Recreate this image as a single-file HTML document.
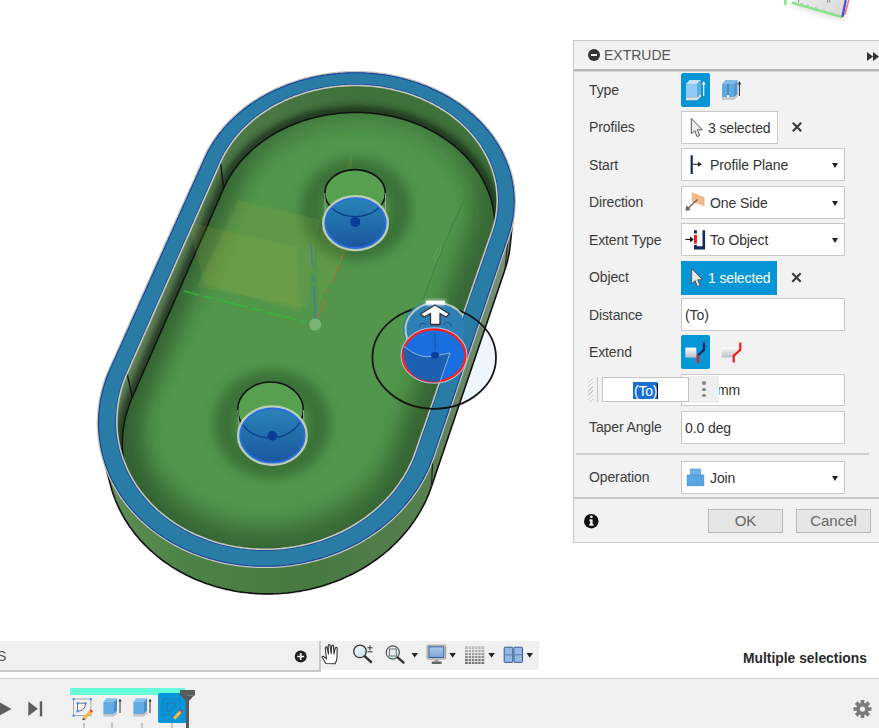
<!DOCTYPE html>
<html><head><meta charset="utf-8">
<style>
*{margin:0;padding:0;box-sizing:border-box}
html,body{width:879px;height:728px;overflow:hidden;background:#fff;font-family:"Liberation Sans",sans-serif;color:#3c3c3c}
.abs{position:absolute}
#panel{position:absolute;left:573px;top:40px;width:330px;height:503px;background:#f2f2f2;border:1px solid #c8c8c8}
#hdr{position:absolute;left:0;top:0;width:100%;height:30px;border-bottom:2px solid #b6b6b6;box-shadow:0 1px 0 #d6d6d6}
#hdr .t{position:absolute;left:30px;top:6px;font-size:14px;color:#555}
.lbl{position:absolute;left:15px;margin-top:-1px;font-size:14px;letter-spacing:-0.12px;color:#3c3c3c;white-space:nowrap}
.box{position:absolute;left:107px;width:164px;height:33px;background:#fff;border:1px solid #c8c8c8;font-size:14px}
.box .v{position:absolute;left:28px;top:8px;color:#333;white-space:nowrap;letter-spacing:-0.1px}
.dd{position:absolute;right:6px;top:14px;width:0;height:0;border-left:3.5px solid transparent;border-right:3.5px solid transparent;border-top:5px solid #222}
.btn{position:absolute;top:468px;width:75px;height:24px;background:#e6e6e6;border:1px solid #b9b9b9;font-size:15px;color:#666;text-align:center;line-height:22px}
#nav{position:absolute;left:0;top:641px;width:539px;height:29px;background:#f0f0f0}
#search{position:absolute;left:0;top:641px;width:321px;height:31px;background:#f0f0f0;border-right:2px solid #c8c8c8;border-bottom:2px solid #c8c8c8}
#tl{position:absolute;left:0;top:678px;width:879px;height:50px;background:#f0f0f0;border-top:1px solid #d0d0d0}
.tick{position:absolute;top:44px;width:2px;height:6px;background:#c4c4c4}
</style></head><body>
<svg class="abs" style="left:0;top:0" width="879" height="640" viewBox="0 0 879 640">
<defs>
  <linearGradient id="gWall" gradientUnits="userSpaceOnUse" x1="100" y1="0" x2="515" y2="0">
    <stop offset="0" stop-color="#6a8a62"/>
    <stop offset="0.08" stop-color="#578a50"/>
    <stop offset="0.2" stop-color="#4e8347"/>
    <stop offset="0.5" stop-color="#467a40"/>
    <stop offset="0.8" stop-color="#587f51"/>
    <stop offset="0.9" stop-color="#6c8868"/>
    <stop offset="1" stop-color="#7a927a"/>
  </linearGradient>
  <filter id="blur8" x="-20%" y="-20%" width="140%" height="140%"><feGaussianBlur stdDeviation="9"/></filter>
  <filter id="blur6" x="-30%" y="-30%" width="160%" height="160%"><feGaussianBlur stdDeviation="6"/></filter>
  <filter id="blur11" x="-30%" y="-30%" width="160%" height="160%"><feGaussianBlur stdDeviation="11"/></filter>
  <filter id="blur3" x="-20%" y="-20%" width="140%" height="140%"><feGaussianBlur stdDeviation="3"/></filter>
  <clipPath id="cIn"><path d="M491.9 231.4 L492.5 229.4 L493.2 227.5 L493.7 225.5 L494.3 223.5 L494.7 221.5 L495.2 219.5 L495.6 217.5 L495.9 215.4 L496.2 213.4 L496.5 211.4 L496.7 209.4 L496.9 207.4 L497.0 205.3 L497.1 203.3 L497.2 201.3 L497.2 199.3 L497.1 197.3 L497.0 195.2 L496.9 193.2 L496.7 191.2 L496.5 189.2 L496.3 187.2 L496.0 185.2 L495.6 183.2 L495.2 181.2 L494.8 179.3 L494.3 177.3 L493.8 175.3 L493.3 173.4 L492.7 171.4 L492.0 169.5 L491.3 167.6 L490.6 165.7 L489.8 163.8 L489.0 161.9 L488.2 160.0 L487.3 158.1 L486.4 156.3 L485.4 154.5 L484.4 152.6 L483.4 150.8 L482.3 149.1 L481.2 147.3 L480.1 145.5 L478.9 143.8 L477.7 142.1 L476.4 140.4 L475.1 138.7 L473.8 137.0 L472.4 135.4 L471.0 133.8 L469.6 132.2 L468.1 130.6 L466.6 129.0 L465.1 127.5 L463.6 126.0 L462.0 124.5 L460.3 123.0 L458.7 121.6 L457.0 120.2 L455.3 118.8 L453.6 117.4 L451.8 116.0 L450.0 114.7 L448.2 113.4 L446.3 112.2 L444.5 110.9 L442.6 109.7 L440.6 108.5 L438.7 107.3 L436.7 106.2 L434.7 105.1 L432.7 104.0 L430.7 103.0 L428.6 101.9 L426.5 100.9 L424.4 100.0 L422.3 99.0 L420.1 98.1 L418.0 97.3 L415.8 96.4 L413.6 95.6 L411.4 94.8 L409.2 94.0 L406.9 93.3 L404.7 92.6 L402.4 92.0 L400.1 91.3 L397.8 90.7 L395.5 90.2 L393.2 89.6 L390.9 89.1 L388.5 88.7 L386.2 88.2 L383.8 87.8 L381.5 87.4 L379.1 87.1 L376.7 86.8 L374.3 86.5 L371.9 86.3 L369.6 86.0 L367.2 85.9 L364.7 85.7 L362.3 85.6 L359.9 85.5 L357.5 85.5 L355.1 85.5 L352.7 85.5 L350.3 85.5 L347.9 85.6 L345.5 85.7 L343.1 85.9 L340.7 86.1 L338.3 86.3 L335.9 86.5 L333.5 86.8 L331.1 87.1 L328.7 87.5 L326.4 87.9 L324.0 88.3 L321.6 88.7 L319.3 89.2 L317.0 89.7 L314.6 90.2 L312.3 90.8 L310.0 91.4 L307.7 92.1 L305.5 92.7 L303.2 93.4 L301.0 94.2 L298.7 94.9 L296.5 95.7 L294.3 96.5 L292.1 97.4 L289.9 98.3 L287.8 99.2 L285.7 100.1 L283.6 101.1 L281.5 102.1 L279.4 103.1 L277.3 104.2 L275.3 105.3 L273.3 106.4 L271.3 107.5 L269.4 108.7 L267.4 109.9 L265.5 111.1 L263.6 112.4 L261.8 113.6 L259.9 114.9 L258.1 116.3 L256.4 117.6 L254.6 119.0 L252.9 120.4 L251.2 121.8 L249.5 123.3 L247.9 124.8 L246.3 126.3 L244.7 127.8 L243.2 129.3 L241.7 130.9 L240.2 132.5 L238.8 134.1 L237.3 135.7 L236.0 137.4 L234.6 139.0 L233.3 140.7 L232.1 142.4 L230.8 144.2 L229.6 145.9 L228.5 147.7 L227.3 149.4 L226.3 151.2 L225.2 153.0 L224.2 154.9 L223.2 156.7 L222.3 158.5 L221.4 160.4 L220.5 162.3 L220.5 162.3 L219.6 164.5 L218.6 166.7 L217.6 169.0 L216.6 171.2 L215.6 173.4 L214.6 175.7 L213.6 177.9 L212.6 180.2 L211.6 182.4 L210.6 184.7 L209.6 186.9 L208.6 189.2 L207.6 191.5 L206.6 193.7 L205.6 196.0 L204.6 198.3 L203.6 200.5 L202.6 202.8 L201.6 205.1 L200.6 207.4 L199.6 209.7 L198.6 212.0 L197.5 214.3 L196.5 216.6 L195.5 218.9 L194.5 221.2 L193.5 223.5 L192.4 225.8 L191.4 228.1 L190.4 230.4 L189.4 232.7 L188.3 235.1 L187.3 237.4 L186.3 239.7 L185.2 242.1 L184.2 244.4 L183.2 246.8 L182.1 249.1 L181.1 251.5 L180.1 253.8 L179.0 256.2 L178.0 258.5 L176.9 260.9 L175.9 263.3 L174.8 265.6 L173.8 268.0 L172.7 270.4 L171.7 272.8 L170.6 275.2 L169.6 277.5 L168.5 279.9 L167.4 282.3 L166.4 284.7 L165.3 287.1 L164.2 289.5 L163.2 292.0 L162.1 294.4 L161.0 296.8 L160.0 299.2 L158.9 301.6 L157.8 304.1 L156.7 306.5 L155.7 308.9 L154.6 311.4 L153.5 313.8 L152.4 316.3 L151.3 318.7 L150.3 321.2 L149.2 323.6 L148.1 326.1 L147.0 328.6 L145.9 331.0 L144.8 333.5 L143.7 336.0 L142.6 338.5 L141.5 340.9 L140.4 343.4 L139.3 345.9 L138.2 348.4 L137.1 350.9 L136.0 353.4 L134.9 355.9 L133.8 358.4 L132.6 360.9 L131.5 363.5 L130.4 366.0 L129.3 368.5 L128.2 371.0 L127.1 373.6 L127.1 373.6 L126.1 375.7 L125.2 377.9 L124.4 380.1 L123.6 382.3 L122.8 384.5 L122.1 386.7 L121.4 389.0 L120.8 391.2 L120.2 393.5 L119.7 395.7 L119.2 398.0 L118.8 400.3 L118.4 402.6 L118.0 404.9 L117.7 407.2 L117.4 409.5 L117.2 411.8 L117.1 414.1 L116.9 416.4 L116.9 418.7 L116.8 421.0 L116.8 423.4 L116.9 425.7 L117.0 428.0 L117.2 430.3 L117.4 432.6 L117.7 434.9 L118.0 437.2 L118.3 439.5 L118.7 441.8 L119.2 444.1 L119.7 446.4 L120.2 448.7 L120.8 450.9 L121.4 453.2 L122.1 455.4 L122.8 457.7 L123.6 459.9 L124.4 462.1 L125.3 464.3 L126.2 466.5 L127.2 468.7 L128.2 470.8 L129.3 473.0 L130.4 475.1 L131.5 477.2 L132.7 479.3 L133.9 481.4 L135.2 483.4 L136.5 485.5 L137.9 487.5 L139.3 489.5 L140.8 491.5 L142.3 493.4 L143.8 495.3 L145.4 497.2 L147.0 499.1 L148.6 500.9 L150.3 502.8 L152.1 504.6 L153.9 506.3 L155.7 508.1 L157.5 509.8 L159.4 511.5 L161.3 513.1 L163.3 514.7 L165.3 516.3 L167.3 517.9 L169.4 519.4 L171.5 520.9 L173.7 522.4 L175.8 523.8 L178.0 525.2 L180.3 526.6 L182.5 527.9 L184.8 529.2 L187.1 530.4 L189.5 531.6 L191.8 532.8 L194.2 534.0 L196.7 535.1 L199.1 536.1 L201.6 537.1 L204.1 538.1 L206.6 539.1 L209.1 540.0 L211.7 540.8 L214.3 541.7 L216.9 542.4 L219.5 543.2 L222.1 543.9 L224.8 544.5 L227.5 545.2 L230.1 545.7 L232.8 546.3 L235.5 546.8 L238.3 547.2 L241.0 547.6 L243.7 548.0 L246.5 548.3 L249.2 548.6 L252.0 548.8 L254.8 549.0 L257.5 549.1 L260.3 549.2 L263.1 549.3 L265.9 549.3 L268.7 549.2 L271.4 549.2 L274.2 549.0 L277.0 548.9 L279.8 548.7 L282.6 548.4 L285.3 548.1 L288.1 547.8 L290.8 547.4 L293.6 547.0 L296.3 546.5 L299.1 546.0 L301.8 545.4 L304.5 544.8 L307.2 544.2 L309.9 543.5 L312.6 542.8 L315.2 542.0 L317.9 541.2 L320.5 540.4 L323.1 539.5 L325.7 538.6 L328.2 537.6 L330.8 536.6 L333.3 535.5 L335.8 534.5 L338.3 533.3 L340.8 532.2 L343.2 531.0 L345.6 529.7 L348.0 528.5 L350.3 527.2 L352.7 525.8 L355.0 524.5 L357.2 523.0 L359.5 521.6 L361.7 520.1 L363.9 518.6 L366.0 517.1 L368.1 515.5 L370.2 513.9 L372.3 512.2 L374.3 510.6 L376.2 508.9 L378.2 507.2 L380.1 505.4 L382.0 503.6 L383.8 501.8 L385.6 500.0 L387.3 498.1 L389.1 496.2 L390.7 494.3 L392.4 492.4 L394.0 490.4 L395.5 488.5 L397.0 486.5 L398.5 484.4 L399.9 482.4 L401.3 480.3 L402.7 478.3 L404.0 476.2 L405.2 474.1 L406.4 471.9 L407.6 469.8 L408.7 467.6 L409.8 465.4 L410.9 463.2 L411.8 461.0 L412.8 458.8 L413.7 456.6 L414.5 454.4 L415.3 452.1 L415.3 452.1 L416.3 449.5 L417.2 446.8 L418.1 444.2 L419.0 441.5 L419.9 438.9 L420.8 436.3 L421.7 433.6 L422.6 431.0 L423.6 428.4 L424.5 425.8 L425.4 423.2 L426.3 420.6 L427.2 418.0 L428.1 415.4 L429.0 412.8 L429.9 410.2 L430.8 407.6 L431.7 405.0 L432.6 402.4 L433.5 399.9 L434.3 397.3 L435.2 394.7 L436.1 392.2 L437.0 389.6 L437.9 387.1 L438.8 384.5 L439.7 382.0 L440.5 379.4 L441.4 376.9 L442.3 374.4 L443.2 371.8 L444.1 369.3 L444.9 366.8 L445.8 364.3 L446.7 361.7 L447.5 359.2 L448.4 356.7 L449.3 354.2 L450.2 351.7 L451.0 349.2 L451.9 346.7 L452.7 344.2 L453.6 341.8 L454.5 339.3 L455.3 336.8 L456.2 334.3 L457.0 331.9 L457.9 329.4 L458.7 326.9 L459.6 324.5 L460.5 322.0 L461.3 319.6 L462.2 317.1 L463.0 314.7 L463.8 312.2 L464.7 309.8 L465.5 307.4 L466.4 304.9 L467.2 302.5 L468.1 300.1 L468.9 297.7 L469.7 295.3 L470.6 292.8 L471.4 290.4 L472.2 288.0 L473.1 285.6 L473.9 283.2 L474.7 280.8 L475.6 278.5 L476.4 276.1 L477.2 273.7 L478.0 271.3 L478.9 268.9 L479.7 266.6 L480.5 264.2 L481.3 261.8 L482.1 259.5 L483.0 257.1 L483.8 254.8 L484.6 252.4 L485.4 250.1 L486.2 247.7 L487.0 245.4 L487.8 243.0 L488.6 240.7 L489.5 238.4 L490.3 236.1 L491.1 233.7 L491.9 231.4 Z"/></clipPath>
  <clipPath id="cFloorVis"><path d="M489.6 256.8 L490.3 254.9 L490.9 252.9 L491.4 250.9 L492.0 249.0 L492.4 247.0 L492.9 245.0 L493.3 243.0 L493.6 241.0 L493.9 239.0 L494.2 237.0 L494.4 235.0 L494.6 233.0 L494.7 231.0 L494.8 229.0 L494.8 227.0 L494.8 225.0 L494.8 223.1 L494.7 221.1 L494.6 219.1 L494.4 217.1 L494.2 215.1 L494.0 213.1 L493.7 211.1 L493.3 209.2 L493.0 207.2 L492.5 205.3 L492.1 203.3 L491.6 201.4 L491.0 199.4 L490.4 197.5 L489.8 195.6 L489.1 193.7 L488.4 191.8 L487.7 189.9 L486.9 188.1 L486.1 186.2 L485.2 184.4 L484.3 182.6 L483.4 180.7 L482.4 179.0 L481.4 177.2 L480.3 175.4 L479.2 173.7 L478.1 171.9 L477.0 170.2 L475.8 168.5 L474.5 166.8 L473.3 165.2 L472.0 163.5 L470.6 161.9 L469.3 160.3 L467.8 158.7 L466.4 157.1 L464.9 155.6 L463.5 154.1 L461.9 152.6 L460.4 151.1 L458.8 149.7 L457.2 148.2 L455.5 146.8 L453.8 145.4 L452.1 144.1 L450.4 142.7 L448.6 141.4 L446.8 140.2 L445.0 138.9 L443.2 137.7 L441.3 136.5 L439.4 135.3 L437.5 134.1 L435.6 133.0 L433.6 131.9 L431.7 130.8 L429.7 129.8 L427.6 128.8 L425.6 127.8 L423.5 126.9 L421.5 125.9 L419.4 125.0 L417.2 124.2 L415.1 123.3 L413.0 122.5 L410.8 121.7 L408.6 121.0 L406.4 120.3 L404.2 119.6 L402.0 118.9 L399.7 118.3 L397.5 117.7 L395.2 117.2 L392.9 116.6 L390.7 116.1 L388.4 115.7 L386.1 115.2 L383.7 114.8 L381.4 114.5 L379.1 114.1 L376.8 113.8 L374.4 113.5 L372.1 113.3 L369.7 113.1 L367.4 112.9 L365.0 112.8 L362.7 112.6 L360.3 112.6 L357.9 112.5 L355.6 112.5 L353.2 112.5 L350.8 112.6 L348.5 112.7 L346.1 112.8 L343.7 112.9 L341.4 113.1 L339.0 113.3 L336.7 113.6 L334.3 113.9 L332.0 114.2 L329.7 114.5 L327.4 114.9 L325.0 115.3 L322.7 115.7 L320.4 116.2 L318.1 116.7 L315.9 117.2 L313.6 117.8 L311.3 118.4 L309.1 119.0 L306.9 119.7 L304.6 120.4 L302.4 121.1 L300.2 121.9 L298.1 122.7 L295.9 123.5 L293.8 124.3 L291.6 125.2 L289.5 126.1 L287.4 127.0 L285.4 128.0 L283.3 129.0 L281.3 130.0 L279.3 131.0 L277.3 132.1 L275.3 133.2 L273.4 134.4 L271.5 135.5 L269.6 136.7 L267.7 137.9 L265.8 139.1 L264.0 140.4 L262.2 141.7 L260.5 143.0 L258.7 144.4 L257.0 145.7 L255.3 147.1 L253.6 148.5 L252.0 150.0 L250.4 151.4 L248.8 152.9 L247.3 154.4 L245.8 155.9 L244.3 157.5 L242.9 159.0 L241.5 160.6 L240.1 162.3 L238.7 163.9 L237.4 165.5 L236.1 167.2 L234.9 168.9 L233.7 170.6 L232.5 172.3 L231.4 174.1 L230.3 175.8 L229.2 177.6 L228.2 179.4 L227.2 181.2 L226.2 183.0 L225.3 184.8 L224.5 186.7 L223.6 188.5 L223.6 188.5 L222.7 190.7 L221.7 192.9 L220.7 195.1 L219.8 197.4 L218.8 199.6 L217.8 201.8 L216.9 204.0 L215.9 206.2 L214.9 208.4 L213.9 210.7 L213.0 212.9 L212.0 215.1 L211.0 217.4 L210.0 219.6 L209.0 221.8 L208.1 224.1 L207.1 226.3 L206.1 228.6 L205.1 230.9 L204.1 233.1 L203.1 235.4 L202.1 237.6 L201.1 239.9 L200.1 242.2 L199.1 244.5 L198.1 246.7 L197.1 249.0 L196.1 251.3 L195.1 253.6 L194.1 255.9 L193.1 258.2 L192.1 260.5 L191.1 262.8 L190.1 265.1 L189.1 267.4 L188.1 269.7 L187.1 272.0 L186.1 274.3 L185.0 276.7 L184.0 279.0 L183.0 281.3 L182.0 283.6 L181.0 286.0 L179.9 288.3 L178.9 290.7 L177.9 293.0 L176.9 295.3 L175.8 297.7 L174.8 300.1 L173.8 302.4 L172.7 304.8 L171.7 307.1 L170.7 309.5 L169.6 311.9 L168.6 314.3 L167.5 316.6 L166.5 319.0 L165.5 321.4 L164.4 323.8 L163.4 326.2 L162.3 328.6 L161.3 331.0 L160.2 333.4 L159.2 335.8 L158.1 338.2 L157.0 340.6 L156.0 343.1 L154.9 345.5 L153.9 347.9 L152.8 350.3 L151.7 352.8 L150.7 355.2 L149.6 357.6 L148.5 360.1 L147.5 362.5 L146.4 365.0 L145.3 367.4 L144.2 369.9 L143.2 372.4 L142.1 374.8 L141.0 377.3 L139.9 379.8 L138.8 382.3 L137.7 384.7 L136.7 387.2 L135.6 389.7 L134.5 392.2 L133.4 394.7 L132.3 397.2 L132.3 397.2 L131.4 399.3 L130.5 401.5 L129.7 403.6 L128.9 405.8 L128.2 408.0 L127.5 410.2 L126.8 412.4 L126.2 414.6 L125.6 416.8 L125.1 419.0 L124.6 421.3 L124.2 423.5 L123.8 425.8 L123.5 428.1 L123.2 430.3 L122.9 432.6 L122.7 434.9 L122.6 437.1 L122.4 439.4 L122.4 441.7 L122.3 444.0 L122.4 446.3 L122.4 448.6 L122.6 450.8 L122.7 453.1 L122.9 455.4 L123.2 457.7 L123.5 459.9 L123.8 462.2 L124.2 464.5 L124.7 466.7 L125.2 469.0 L125.7 471.2 L126.3 473.4 L126.9 475.7 L127.6 477.9 L128.3 480.1 L129.1 482.3 L129.9 484.5 L130.7 486.6 L131.6 488.8 L132.6 490.9 L133.6 493.1 L134.6 495.2 L135.7 497.3 L136.8 499.3 L138.0 501.4 L139.2 503.4 L140.4 505.5 L141.7 507.5 L143.1 509.4 L144.4 511.4 L145.9 513.3 L147.3 515.3 L148.8 517.2 L150.4 519.0 L152.0 520.9 L153.6 522.7 L155.3 524.5 L157.0 526.3 L158.7 528.0 L160.5 529.7 L162.3 531.4 L164.2 533.0 L166.0 534.7 L168.0 536.3 L169.9 537.8 L171.9 539.4 L173.9 540.9 L176.0 542.4 L178.1 543.8 L180.2 545.2 L182.4 546.6 L184.6 547.9 L186.8 549.2 L189.0 550.5 L191.3 551.7 L193.6 552.9 L195.9 554.1 L198.3 555.2 L200.6 556.3 L203.0 557.3 L205.4 558.3 L207.9 559.3 L210.4 560.2 L212.8 561.1 L215.4 562.0 L217.9 562.8 L220.4 563.5 L223.0 564.3 L225.6 565.0 L228.2 565.6 L230.8 566.2 L233.4 566.8 L236.0 567.3 L238.7 567.8 L241.3 568.2 L244.0 568.6 L246.7 569.0 L249.4 569.3 L252.1 569.5 L254.8 569.8 L257.5 569.9 L260.2 570.1 L262.9 570.2 L265.6 570.2 L268.3 570.2 L271.1 570.2 L273.8 570.1 L276.5 570.0 L279.2 569.8 L281.9 569.6 L284.7 569.4 L287.4 569.1 L290.1 568.8 L292.8 568.4 L295.5 568.0 L298.1 567.5 L300.8 567.0 L303.5 566.5 L306.1 565.9 L308.8 565.2 L311.4 564.6 L314.0 563.9 L316.6 563.1 L319.2 562.3 L321.7 561.5 L324.3 560.6 L326.8 559.7 L329.3 558.7 L331.8 557.8 L334.3 556.7 L336.7 555.7 L339.2 554.6 L341.6 553.4 L344.0 552.2 L346.3 551.0 L348.6 549.8 L351.0 548.5 L353.2 547.2 L355.5 545.8 L357.7 544.4 L359.9 543.0 L362.1 541.5 L364.2 540.1 L366.3 538.5 L368.4 537.0 L370.4 535.4 L372.4 533.8 L374.4 532.1 L376.3 530.5 L378.2 528.8 L380.1 527.1 L381.9 525.3 L383.7 523.5 L385.4 521.7 L387.2 519.9 L388.8 518.0 L390.5 516.1 L392.1 514.2 L393.6 512.3 L395.2 510.4 L396.7 508.4 L398.1 506.4 L399.5 504.4 L400.8 502.4 L402.2 500.3 L403.4 498.3 L404.7 496.2 L405.9 494.1 L407.0 492.0 L408.1 489.8 L409.2 487.7 L410.2 485.5 L411.1 483.4 L412.1 481.2 L412.9 479.0 L413.8 476.8 L414.6 474.6 L414.6 474.6 L415.5 471.9 L416.4 469.3 L417.3 466.7 L418.2 464.1 L419.0 461.5 L419.9 458.9 L420.8 456.4 L421.7 453.8 L422.6 451.2 L423.5 448.6 L424.4 446.0 L425.3 443.5 L426.2 440.9 L427.0 438.4 L427.9 435.8 L428.8 433.2 L429.7 430.7 L430.6 428.1 L431.4 425.6 L432.3 423.1 L433.2 420.5 L434.1 418.0 L434.9 415.5 L435.8 413.0 L436.7 410.4 L437.5 407.9 L438.4 405.4 L439.3 402.9 L440.1 400.4 L441.0 397.9 L441.8 395.4 L442.7 392.9 L443.6 390.4 L444.4 387.9 L445.3 385.5 L446.1 383.0 L447.0 380.5 L447.8 378.0 L448.7 375.6 L449.5 373.1 L450.4 370.7 L451.2 368.2 L452.1 365.7 L452.9 363.3 L453.8 360.9 L454.6 358.4 L455.4 356.0 L456.3 353.5 L457.1 351.1 L457.9 348.7 L458.8 346.3 L459.6 343.8 L460.5 341.4 L461.3 339.0 L462.1 336.6 L462.9 334.2 L463.8 331.8 L464.6 329.4 L465.4 327.0 L466.2 324.6 L467.1 322.2 L467.9 319.9 L468.7 317.5 L469.5 315.1 L470.3 312.7 L471.2 310.4 L472.0 308.0 L472.8 305.6 L473.6 303.3 L474.4 300.9 L475.2 298.6 L476.0 296.2 L476.8 293.9 L477.7 291.5 L478.5 289.2 L479.3 286.9 L480.1 284.5 L480.9 282.2 L481.7 279.9 L482.5 277.5 L483.3 275.2 L484.1 272.9 L484.9 270.6 L485.7 268.3 L486.5 266.0 L487.3 263.7 L488.0 261.4 L488.8 259.1 L489.6 256.8 Z"/></clipPath>
  <linearGradient id="gBand" gradientUnits="userSpaceOnUse" x1="130" y1="400" x2="360" y2="90">
    <stop offset="0" stop-color="#67845f"/>
    <stop offset="0.45" stop-color="#5c7e56"/>
    <stop offset="1" stop-color="#3f723b"/>
  </linearGradient>
  <linearGradient id="gDisc" x1="0" y1="0" x2="0" y2="1">
    <stop offset="0" stop-color="#2a84b6"/>
    <stop offset="1" stop-color="#1a57a0"/>
  </linearGradient>
  <filter id="glow" x="-50%" y="-50%" width="200%" height="200%"><feGaussianBlur stdDeviation="2"/></filter>
  <linearGradient id="gAO" gradientUnits="userSpaceOnUse" x1="150" y1="380" x2="380" y2="110">
    <stop offset="0" stop-color="#2f5a2d" stop-opacity="0.5"/>
    <stop offset="0.6" stop-color="#2f5a2d" stop-opacity="0.35"/>
    <stop offset="1" stop-color="#2f5a2d" stop-opacity="0.15"/>
  </linearGradient>
</defs>
<ellipse cx="434.2" cy="357.6" rx="61.8" ry="51.2" fill="#eef5fc"/>
<path d="M431.4 486.7 L430.5 489.2 L429.6 491.7 L428.7 494.1 L427.6 496.6 L426.6 499.0 L425.5 501.4 L424.3 503.8 L423.1 506.2 L421.8 508.5 L420.5 510.9 L419.1 513.2 L417.7 515.5 L416.3 517.8 L414.8 520.1 L413.2 522.3 L411.6 524.6 L410.0 526.8 L408.3 528.9 L406.6 531.1 L404.8 533.2 L403.0 535.3 L401.1 537.4 L399.2 539.5 L397.3 541.5 L395.3 543.5 L393.2 545.5 L391.2 547.4 L389.1 549.3 L386.9 551.2 L384.7 553.0 L382.5 554.8 L380.2 556.6 L377.9 558.3 L375.6 560.0 L373.2 561.7 L370.8 563.3 L368.4 564.9 L365.9 566.5 L363.4 568.0 L360.9 569.5 L358.3 570.9 L355.7 572.3 L353.1 573.7 L350.4 575.0 L347.7 576.3 L345.0 577.5 L342.3 578.7 L339.6 579.9 L336.8 581.0 L334.0 582.1 L331.2 583.1 L328.3 584.1 L325.4 585.0 L322.6 585.9 L319.7 586.7 L316.8 587.5 L313.8 588.3 L310.9 589.0 L307.9 589.7 L305.0 590.3 L302.0 590.8 L299.0 591.4 L296.0 591.8 L293.0 592.3 L290.0 592.6 L286.9 593.0 L283.9 593.2 L280.9 593.5 L277.8 593.7 L274.8 593.8 L271.8 593.9 L268.7 593.9 L265.7 593.9 L262.6 593.9 L259.6 593.8 L256.6 593.6 L253.6 593.4 L250.5 593.1 L247.5 592.8 L244.5 592.5 L241.5 592.1 L238.6 591.7 L235.6 591.2 L232.6 590.6 L229.7 590.0 L226.8 589.4 L223.9 588.7 L221.0 588.0 L218.1 587.2 L215.2 586.4 L212.4 585.5 L209.6 584.6 L206.8 583.7 L204.0 582.7 L201.3 581.6 L198.5 580.5 L195.8 579.4 L193.2 578.2 L190.5 577.0 L187.9 575.8 L185.3 574.5 L182.7 573.1 L180.2 571.7 L177.7 570.3 L175.3 568.9 L172.8 567.4 L170.4 565.8 L168.1 564.2 L165.7 562.6 L163.4 561.0 L161.2 559.3 L159.0 557.6 L156.8 555.8 L154.7 554.0 L152.6 552.2 L150.5 550.3 L148.5 548.5 L146.5 546.5 L144.6 544.6 L142.7 542.6 L140.8 540.6 L139.0 538.5 L137.3 536.5 L135.5 534.4 L133.9 532.3 L132.2 530.1 L130.7 527.9 L129.1 525.8 L127.7 523.5 L126.2 521.3 L124.8 519.0 L123.5 516.7 L122.2 514.4 L121.0 512.1 L119.8 509.8 L118.6 507.4 L117.5 505.0 L116.5 502.6 L115.5 500.2 L114.6 497.8 L113.7 495.4 L112.8 492.9 L112.0 490.5 L111.3 488.0 L110.6 485.5 L102.8 455.6 L102.1 453.1 L101.5 450.5 L101.0 447.9 L100.5 445.4 L100.1 442.8 L99.7 440.2 L99.4 437.6 L99.1 435.1 L98.9 432.5 L98.7 429.9 L98.6 427.3 L98.5 424.7 L98.5 422.1 L98.6 419.5 L98.7 416.9 L98.8 414.3 L99.0 411.7 L99.3 409.1 L99.6 406.6 L99.9 404.0 L100.3 401.4 L100.8 398.9 L101.3 396.3 L101.9 393.8 L102.5 391.2 L103.2 388.7 L103.9 386.2 L104.6 383.7 L105.5 381.2 L106.3 378.7 L107.2 376.3 L108.2 373.8 L109.2 371.4 L110.2 369.0 L204.7 158.3 L205.7 156.2 L206.7 154.1 L207.7 152.0 L208.8 150.0 L210.0 147.9 L211.1 145.9 L212.4 143.9 L213.6 141.9 L214.9 140.0 L216.3 138.0 L217.7 136.1 L219.1 134.2 L220.6 132.3 L222.1 130.5 L223.6 128.6 L225.2 126.8 L226.8 125.0 L228.5 123.2 L230.2 121.5 L231.9 119.8 L233.7 118.1 L235.5 116.4 L237.3 114.8 L239.1 113.2 L241.0 111.6 L243.0 110.0 L244.9 108.5 L246.9 107.0 L248.9 105.5 L251.0 104.0 L253.1 102.6 L255.2 101.2 L257.3 99.9 L259.5 98.5 L261.7 97.2 L263.9 96.0 L266.1 94.7 L268.4 93.5 L270.7 92.3 L273.0 91.2 L275.3 90.1 L277.7 89.0 L280.1 88.0 L282.5 86.9 L284.9 86.0 L287.3 85.0 L289.8 84.1 L292.3 83.2 L294.8 82.4 L297.3 81.6 L299.8 80.8 L302.3 80.1 L304.9 79.3 L307.4 78.7 L310.0 78.0 L312.6 77.4 L315.2 76.9 L317.8 76.3 L320.5 75.9 L323.1 75.4 L325.7 75.0 L328.4 74.6 L331.0 74.2 L333.7 73.9 L336.4 73.7 L339.0 73.4 L341.7 73.2 L344.4 73.0 L347.1 72.9 L349.8 72.8 L352.5 72.8 L355.1 72.7 L357.8 72.8 L360.5 72.8 L363.2 72.9 L365.9 73.0 L368.6 73.2 L371.2 73.4 L373.9 73.6 L376.6 73.9 L379.2 74.2 L381.9 74.5 L384.5 74.9 L387.2 75.3 L389.8 75.8 L392.4 76.3 L395.0 76.8 L397.6 77.4 L400.2 78.0 L402.8 78.6 L405.3 79.3 L407.9 80.0 L410.4 80.7 L412.9 81.5 L415.4 82.3 L417.9 83.1 L420.4 84.0 L422.8 84.9 L425.3 85.8 L427.7 86.8 L430.1 87.8 L432.4 88.9 L434.8 89.9 L437.1 91.0 L439.4 92.2 L441.7 93.3 L443.9 94.5 L446.2 95.8 L448.4 97.0 L450.5 98.3 L452.7 99.7 L454.8 101.0 L456.9 102.4 L459.0 103.8 L461.0 105.3 L463.0 106.7 L465.0 108.2 L466.9 109.7 L468.9 111.3 L470.7 112.9 L472.6 114.5 L474.4 116.1 L476.2 117.8 L477.9 119.5 L479.7 121.2 L481.3 122.9 L483.0 124.7 L484.6 126.5 L486.1 128.3 L487.7 130.1 L489.2 132.0 L490.6 133.8 L492.0 135.7 L493.4 137.6 L494.7 139.6 L496.0 141.5 L497.3 143.5 L498.5 145.5 L499.7 147.5 L500.8 149.5 L501.9 151.6 L502.9 153.6 L503.9 155.7 L504.8 157.8 L505.8 159.9 L506.6 162.0 L507.4 164.2 L508.2 166.3 L508.9 168.5 L509.6 170.6 L510.3 172.8 L510.8 175.0 L511.4 177.2 L511.9 179.4 L512.3 181.6 L512.7 183.9 L513.1 186.1 L513.4 188.3 L513.6 190.6 L513.8 192.8 L514.0 195.1 L514.1 197.3 L514.2 199.6 L514.2 201.9 L514.1 204.1 L514.0 206.4 L513.9 208.7 L513.7 210.9 L510.2 245.1 L509.9 247.3 L509.7 249.6 L509.3 251.8 L509.0 254.0 L508.5 256.2 L508.1 258.4 L507.5 260.7 L507.0 262.9 L506.3 265.0 L505.7 267.2 L505.0 269.4 Z" fill="url(#gWall)"/>
<path d="M513.7 210.9 L510.2 245.1 L509.9 247.3 L509.7 249.6 L509.3 251.8 L509.0 254.0 L508.5 256.2 L508.1 258.4 L507.5 260.7 L507.0 262.9 L506.3 265.0 L505.7 267.2 L505.0 269.4 L431.4 486.7 L430.5 489.2 L429.6 491.7 L428.7 494.1 L427.6 496.6 L426.6 499.0 L425.5 501.4 L424.3 503.8 L423.1 506.2 L421.8 508.5 L420.5 510.9 L419.1 513.2 L417.7 515.5 L416.3 517.8 L414.8 520.1 L413.2 522.3 L411.6 524.6 L410.0 526.8 L408.3 528.9 L406.6 531.1 L404.8 533.2 L403.0 535.3 L401.1 537.4 L399.2 539.5 L397.3 541.5 L395.3 543.5 L393.2 545.5 L391.2 547.4 L389.1 549.3 L386.9 551.2 L384.7 553.0 L382.5 554.8 L380.2 556.6 L377.9 558.3 L375.6 560.0 L373.2 561.7 L370.8 563.3 L368.4 564.9 L365.9 566.5 L363.4 568.0 L360.9 569.5 L358.3 570.9 L355.7 572.3 L353.1 573.7 L350.4 575.0 L347.7 576.3 L345.0 577.5 L342.3 578.7 L339.6 579.9 L336.8 581.0 L334.0 582.1 L331.2 583.1 L328.3 584.1 L325.4 585.0 L322.6 585.9 L319.7 586.7 L316.8 587.5 L313.8 588.3 L310.9 589.0 L307.9 589.7 L305.0 590.3 L302.0 590.8 L299.0 591.4 L296.0 591.8 L293.0 592.3 L290.0 592.6 L286.9 593.0 L283.9 593.2 L280.9 593.5 L277.8 593.7 L274.8 593.8 L271.8 593.9 L268.7 593.9 L265.7 593.9 L262.6 593.9 L259.6 593.8 L256.6 593.6 L253.6 593.4 L250.5 593.1 L247.5 592.8 L244.5 592.5 L241.5 592.1 L238.6 591.7 L235.6 591.2 L232.6 590.6 L229.7 590.0 L226.8 589.4 L223.9 588.7 L221.0 588.0 L218.1 587.2 L215.2 586.4 L212.4 585.5 L209.6 584.6 L206.8 583.7 L204.0 582.7 L201.3 581.6 L198.5 580.5 L195.8 579.4 L193.2 578.2 L190.5 577.0 L187.9 575.8 L185.3 574.5 L182.7 573.1 L180.2 571.7 L177.7 570.3 L175.3 568.9 L172.8 567.4 L170.4 565.8 L168.1 564.2 L165.7 562.6 L163.4 561.0 L161.2 559.3 L159.0 557.6 L156.8 555.8 L154.7 554.0 L152.6 552.2 L150.5 550.3 L148.5 548.5 L146.5 546.5 L144.6 544.6 L142.7 542.6 L140.8 540.6 L139.0 538.5 L137.3 536.5 L135.5 534.4 L133.9 532.3 L132.2 530.1 L130.7 527.9 L129.1 525.8 L127.7 523.5 L126.2 521.3 L124.8 519.0 L123.5 516.7 L122.2 514.4 L121.0 512.1 L119.8 509.8 L118.6 507.4 L117.5 505.0 L116.5 502.6 L115.5 500.2 L114.6 497.8 L113.7 495.4 L112.8 492.9 L112.0 490.5 L111.3 488.0 L110.6 485.5 L102.8 455.6" fill="none" stroke="#111" stroke-width="1.6"/>
<path d="M432.9 456.9 L431.4 486.7 M508.4 235.6 L505.0 269.4" stroke="#222" stroke-width="1.2"/>
<path d="M508.4 235.6 L509.1 233.4 L509.8 231.2 L510.5 229.0 L511.0 226.7 L511.6 224.5 L512.0 222.2 L512.5 220.0 L512.9 217.7 L513.2 215.5 L513.5 213.2 L513.7 210.9 L513.9 208.7 L514.0 206.4 L514.1 204.1 L514.2 201.9 L514.2 199.6 L514.1 197.3 L514.0 195.1 L513.8 192.8 L513.6 190.6 L513.4 188.3 L513.1 186.1 L512.7 183.9 L512.3 181.6 L511.9 179.4 L511.4 177.2 L510.8 175.0 L510.3 172.8 L509.6 170.6 L508.9 168.5 L508.2 166.3 L507.4 164.2 L506.6 162.0 L505.8 159.9 L504.8 157.8 L503.9 155.7 L502.9 153.6 L501.9 151.6 L500.8 149.5 L499.7 147.5 L498.5 145.5 L497.3 143.5 L496.0 141.5 L494.7 139.6 L493.4 137.6 L492.0 135.7 L490.6 133.8 L489.2 132.0 L487.7 130.1 L486.1 128.3 L484.6 126.5 L483.0 124.7 L481.3 122.9 L479.7 121.2 L477.9 119.5 L476.2 117.8 L474.4 116.1 L472.6 114.5 L470.7 112.9 L468.9 111.3 L466.9 109.7 L465.0 108.2 L463.0 106.7 L461.0 105.3 L459.0 103.8 L456.9 102.4 L454.8 101.0 L452.7 99.7 L450.5 98.3 L448.4 97.0 L446.2 95.8 L443.9 94.5 L441.7 93.3 L439.4 92.2 L437.1 91.0 L434.8 89.9 L432.4 88.9 L430.1 87.8 L427.7 86.8 L425.3 85.8 L422.8 84.9 L420.4 84.0 L417.9 83.1 L415.4 82.3 L412.9 81.5 L410.4 80.7 L407.9 80.0 L405.3 79.3 L402.8 78.6 L400.2 78.0 L397.6 77.4 L395.0 76.8 L392.4 76.3 L389.8 75.8 L387.2 75.3 L384.5 74.9 L381.9 74.5 L379.2 74.2 L376.6 73.9 L373.9 73.6 L371.2 73.4 L368.6 73.2 L365.9 73.0 L363.2 72.9 L360.5 72.8 L357.8 72.8 L355.1 72.7 L352.5 72.8 L349.8 72.8 L347.1 72.9 L344.4 73.0 L341.7 73.2 L339.0 73.4 L336.4 73.7 L333.7 73.9 L331.0 74.2 L328.4 74.6 L325.7 75.0 L323.1 75.4 L320.5 75.9 L317.8 76.3 L315.2 76.9 L312.6 77.4 L310.0 78.0 L307.4 78.7 L304.9 79.3 L302.3 80.1 L299.8 80.8 L297.3 81.6 L294.8 82.4 L292.3 83.2 L289.8 84.1 L287.3 85.0 L284.9 86.0 L282.5 86.9 L280.1 88.0 L277.7 89.0 L275.3 90.1 L273.0 91.2 L270.7 92.3 L268.4 93.5 L266.1 94.7 L263.9 96.0 L261.7 97.2 L259.5 98.5 L257.3 99.9 L255.2 101.2 L253.1 102.6 L251.0 104.0 L248.9 105.5 L246.9 107.0 L244.9 108.5 L243.0 110.0 L241.0 111.6 L239.1 113.2 L237.3 114.8 L235.5 116.4 L233.7 118.1 L231.9 119.8 L230.2 121.5 L228.5 123.2 L226.8 125.0 L225.2 126.8 L223.6 128.6 L222.1 130.5 L220.6 132.3 L219.1 134.2 L217.7 136.1 L216.3 138.0 L214.9 140.0 L213.6 141.9 L212.4 143.9 L211.1 145.9 L210.0 147.9 L208.8 150.0 L207.7 152.0 L206.7 154.1 L205.7 156.2 L204.7 158.3 L204.7 158.3 L203.7 160.5 L202.7 162.7 L201.7 164.9 L200.7 167.2 L199.7 169.4 L198.7 171.6 L197.7 173.9 L196.7 176.1 L195.7 178.3 L194.7 180.6 L193.7 182.8 L192.7 185.1 L191.7 187.3 L190.6 189.6 L189.6 191.9 L188.6 194.1 L187.6 196.4 L186.6 198.7 L185.6 201.0 L184.5 203.2 L183.5 205.5 L182.5 207.8 L181.5 210.1 L180.4 212.4 L179.4 214.7 L178.4 217.0 L177.3 219.3 L176.3 221.6 L175.3 223.9 L174.2 226.2 L173.2 228.5 L172.2 230.9 L171.1 233.2 L170.1 235.5 L169.0 237.8 L168.0 240.2 L166.9 242.5 L165.9 244.8 L164.8 247.2 L163.8 249.5 L162.7 251.9 L161.7 254.2 L160.6 256.6 L159.6 259.0 L158.5 261.3 L157.4 263.7 L156.4 266.1 L155.3 268.5 L154.2 270.8 L153.2 273.2 L152.1 275.6 L151.0 278.0 L150.0 280.4 L148.9 282.8 L147.8 285.2 L146.7 287.6 L145.7 290.0 L144.6 292.4 L143.5 294.8 L142.4 297.2 L141.3 299.7 L140.2 302.1 L139.1 304.5 L138.1 307.0 L137.0 309.4 L135.9 311.8 L134.8 314.3 L133.7 316.7 L132.6 319.2 L131.5 321.6 L130.4 324.1 L129.3 326.6 L128.2 329.0 L127.1 331.5 L125.9 334.0 L124.8 336.4 L123.7 338.9 L122.6 341.4 L121.5 343.9 L120.4 346.4 L119.3 348.9 L118.1 351.4 L117.0 353.9 L115.9 356.4 L114.8 358.9 L113.6 361.4 L112.5 364.0 L111.4 366.5 L110.2 369.0 L110.2 369.0 L109.2 371.4 L108.2 373.8 L107.2 376.3 L106.3 378.7 L105.5 381.2 L104.6 383.7 L103.9 386.2 L103.2 388.7 L102.5 391.2 L101.9 393.8 L101.3 396.3 L100.8 398.9 L100.3 401.4 L99.9 404.0 L99.6 406.6 L99.3 409.1 L99.0 411.7 L98.8 414.3 L98.7 416.9 L98.6 419.5 L98.5 422.1 L98.5 424.7 L98.6 427.3 L98.7 429.9 L98.9 432.5 L99.1 435.1 L99.4 437.6 L99.7 440.2 L100.1 442.8 L100.5 445.4 L101.0 447.9 L101.5 450.5 L102.1 453.1 L102.8 455.6 L103.5 458.1 L104.2 460.7 L105.0 463.2 L105.9 465.7 L106.8 468.2 L107.8 470.6 L108.8 473.1 L109.9 475.5 L111.0 478.0 L112.1 480.4 L113.4 482.8 L114.6 485.1 L116.0 487.5 L117.3 489.8 L118.8 492.1 L120.2 494.4 L121.8 496.7 L123.3 498.9 L125.0 501.1 L126.6 503.3 L128.3 505.5 L130.1 507.6 L131.9 509.7 L133.8 511.8 L135.7 513.9 L137.6 515.9 L139.6 517.9 L141.6 519.9 L143.7 521.8 L145.8 523.7 L148.0 525.6 L150.2 527.4 L152.4 529.2 L154.7 530.9 L157.0 532.7 L159.4 534.3 L161.8 536.0 L164.2 537.6 L166.7 539.2 L169.2 540.7 L171.7 542.2 L174.3 543.7 L176.9 545.1 L179.5 546.4 L182.2 547.8 L184.9 549.1 L187.6 550.3 L190.3 551.5 L193.1 552.7 L195.9 553.8 L198.8 554.8 L201.6 555.9 L204.5 556.8 L207.4 557.8 L210.3 558.6 L213.3 559.5 L216.2 560.3 L219.2 561.0 L222.2 561.7 L225.2 562.4 L228.2 563.0 L231.3 563.5 L234.3 564.0 L237.4 564.5 L240.5 564.9 L243.6 565.2 L246.7 565.5 L249.8 565.8 L252.9 566.0 L256.0 566.2 L259.1 566.3 L262.3 566.3 L265.4 566.3 L268.5 566.3 L271.7 566.2 L274.8 566.1 L277.9 565.9 L281.0 565.7 L284.2 565.4 L287.3 565.0 L290.4 564.6 L293.5 564.2 L296.6 563.7 L299.7 563.2 L302.7 562.6 L305.8 562.0 L308.8 561.3 L311.9 560.6 L314.9 559.8 L317.9 559.0 L320.9 558.1 L323.8 557.2 L326.8 556.3 L329.7 555.3 L332.6 554.2 L335.5 553.1 L338.4 552.0 L341.2 550.8 L344.0 549.6 L346.8 548.3 L349.6 547.0 L352.3 545.7 L355.0 544.3 L357.7 542.9 L360.3 541.4 L362.9 539.9 L365.5 538.3 L368.1 536.7 L370.6 535.1 L373.1 533.4 L375.5 531.7 L377.9 530.0 L380.3 528.2 L382.6 526.4 L384.9 524.5 L387.2 522.7 L389.4 520.8 L391.5 518.8 L393.7 516.8 L395.8 514.8 L397.8 512.8 L399.8 510.7 L401.8 508.6 L403.7 506.5 L405.6 504.4 L407.4 502.2 L409.2 500.0 L410.9 497.8 L412.6 495.5 L414.2 493.2 L415.8 490.9 L417.4 488.6 L418.9 486.3 L420.3 483.9 L421.7 481.6 L423.1 479.2 L424.4 476.7 L425.6 474.3 L426.8 471.9 L428.0 469.4 L429.1 466.9 L430.1 464.4 L431.1 461.9 L432.0 459.4 L432.9 456.9 L432.9 456.9 L433.8 454.3 L434.7 451.6 L435.6 448.9 L436.5 446.3 L437.4 443.7 L438.3 441.0 L439.2 438.4 L440.1 435.8 L441.0 433.1 L441.9 430.5 L442.8 427.9 L443.7 425.3 L444.6 422.7 L445.5 420.1 L446.4 417.5 L447.3 414.9 L448.2 412.3 L449.0 409.7 L449.9 407.1 L450.8 404.5 L451.7 401.9 L452.6 399.4 L453.4 396.8 L454.3 394.2 L455.2 391.7 L456.1 389.1 L456.9 386.6 L457.8 384.0 L458.7 381.5 L459.5 378.9 L460.4 376.4 L461.3 373.9 L462.1 371.3 L463.0 368.8 L463.8 366.3 L464.7 363.8 L465.6 361.3 L466.4 358.7 L467.3 356.2 L468.1 353.7 L469.0 351.2 L469.8 348.7 L470.7 346.3 L471.5 343.8 L472.4 341.3 L473.2 338.8 L474.1 336.3 L474.9 333.9 L475.7 331.4 L476.6 328.9 L477.4 326.5 L478.3 324.0 L479.1 321.5 L479.9 319.1 L480.8 316.7 L481.6 314.2 L482.4 311.8 L483.3 309.3 L484.1 306.9 L484.9 304.5 L485.8 302.1 L486.6 299.6 L487.4 297.2 L488.2 294.8 L489.0 292.4 L489.9 290.0 L490.7 287.6 L491.5 285.2 L492.3 282.8 L493.1 280.4 L494.0 278.0 L494.8 275.6 L495.6 273.2 L496.4 270.9 L497.2 268.5 L498.0 266.1 L498.8 263.8 L499.6 261.4 L500.4 259.0 L501.2 256.7 L502.0 254.3 L502.8 252.0 L503.6 249.6 L504.4 247.3 L505.2 244.9 L506.0 242.6 L506.8 240.3 L507.6 237.9 L508.4 235.6 Z" fill="none" stroke="#c0c6b8" stroke-width="3.6"/>
<path d="M508.4 235.6 L509.1 233.4 L509.8 231.2 L510.5 229.0 L511.0 226.7 L511.6 224.5 L512.0 222.2 L512.5 220.0 L512.9 217.7 L513.2 215.5 L513.5 213.2 L513.7 210.9 L513.9 208.7 L514.0 206.4 L514.1 204.1 L514.2 201.9 L514.2 199.6 L514.1 197.3 L514.0 195.1 L513.8 192.8 L513.6 190.6 L513.4 188.3 L513.1 186.1 L512.7 183.9 L512.3 181.6 L511.9 179.4 L511.4 177.2 L510.8 175.0 L510.3 172.8 L509.6 170.6 L508.9 168.5 L508.2 166.3 L507.4 164.2 L506.6 162.0 L505.8 159.9 L504.8 157.8 L503.9 155.7 L502.9 153.6 L501.9 151.6 L500.8 149.5 L499.7 147.5 L498.5 145.5 L497.3 143.5 L496.0 141.5 L494.7 139.6 L493.4 137.6 L492.0 135.7 L490.6 133.8 L489.2 132.0 L487.7 130.1 L486.1 128.3 L484.6 126.5 L483.0 124.7 L481.3 122.9 L479.7 121.2 L477.9 119.5 L476.2 117.8 L474.4 116.1 L472.6 114.5 L470.7 112.9 L468.9 111.3 L466.9 109.7 L465.0 108.2 L463.0 106.7 L461.0 105.3 L459.0 103.8 L456.9 102.4 L454.8 101.0 L452.7 99.7 L450.5 98.3 L448.4 97.0 L446.2 95.8 L443.9 94.5 L441.7 93.3 L439.4 92.2 L437.1 91.0 L434.8 89.9 L432.4 88.9 L430.1 87.8 L427.7 86.8 L425.3 85.8 L422.8 84.9 L420.4 84.0 L417.9 83.1 L415.4 82.3 L412.9 81.5 L410.4 80.7 L407.9 80.0 L405.3 79.3 L402.8 78.6 L400.2 78.0 L397.6 77.4 L395.0 76.8 L392.4 76.3 L389.8 75.8 L387.2 75.3 L384.5 74.9 L381.9 74.5 L379.2 74.2 L376.6 73.9 L373.9 73.6 L371.2 73.4 L368.6 73.2 L365.9 73.0 L363.2 72.9 L360.5 72.8 L357.8 72.8 L355.1 72.7 L352.5 72.8 L349.8 72.8 L347.1 72.9 L344.4 73.0 L341.7 73.2 L339.0 73.4 L336.4 73.7 L333.7 73.9 L331.0 74.2 L328.4 74.6 L325.7 75.0 L323.1 75.4 L320.5 75.9 L317.8 76.3 L315.2 76.9 L312.6 77.4 L310.0 78.0 L307.4 78.7 L304.9 79.3 L302.3 80.1 L299.8 80.8 L297.3 81.6 L294.8 82.4 L292.3 83.2 L289.8 84.1 L287.3 85.0 L284.9 86.0 L282.5 86.9 L280.1 88.0 L277.7 89.0 L275.3 90.1 L273.0 91.2 L270.7 92.3 L268.4 93.5 L266.1 94.7 L263.9 96.0 L261.7 97.2 L259.5 98.5 L257.3 99.9 L255.2 101.2 L253.1 102.6 L251.0 104.0 L248.9 105.5 L246.9 107.0 L244.9 108.5 L243.0 110.0 L241.0 111.6 L239.1 113.2 L237.3 114.8 L235.5 116.4 L233.7 118.1 L231.9 119.8 L230.2 121.5 L228.5 123.2 L226.8 125.0 L225.2 126.8 L223.6 128.6 L222.1 130.5 L220.6 132.3 L219.1 134.2 L217.7 136.1 L216.3 138.0 L214.9 140.0 L213.6 141.9 L212.4 143.9 L211.1 145.9 L210.0 147.9 L208.8 150.0 L207.7 152.0 L206.7 154.1 L205.7 156.2 L204.7 158.3 L204.7 158.3 L203.7 160.5 L202.7 162.7 L201.7 164.9 L200.7 167.2 L199.7 169.4 L198.7 171.6 L197.7 173.9 L196.7 176.1 L195.7 178.3 L194.7 180.6 L193.7 182.8 L192.7 185.1 L191.7 187.3 L190.6 189.6 L189.6 191.9 L188.6 194.1 L187.6 196.4 L186.6 198.7 L185.6 201.0 L184.5 203.2 L183.5 205.5 L182.5 207.8 L181.5 210.1 L180.4 212.4 L179.4 214.7 L178.4 217.0 L177.3 219.3 L176.3 221.6 L175.3 223.9 L174.2 226.2 L173.2 228.5 L172.2 230.9 L171.1 233.2 L170.1 235.5 L169.0 237.8 L168.0 240.2 L166.9 242.5 L165.9 244.8 L164.8 247.2 L163.8 249.5 L162.7 251.9 L161.7 254.2 L160.6 256.6 L159.6 259.0 L158.5 261.3 L157.4 263.7 L156.4 266.1 L155.3 268.5 L154.2 270.8 L153.2 273.2 L152.1 275.6 L151.0 278.0 L150.0 280.4 L148.9 282.8 L147.8 285.2 L146.7 287.6 L145.7 290.0 L144.6 292.4 L143.5 294.8 L142.4 297.2 L141.3 299.7 L140.2 302.1 L139.1 304.5 L138.1 307.0 L137.0 309.4 L135.9 311.8 L134.8 314.3 L133.7 316.7 L132.6 319.2 L131.5 321.6 L130.4 324.1 L129.3 326.6 L128.2 329.0 L127.1 331.5 L125.9 334.0 L124.8 336.4 L123.7 338.9 L122.6 341.4 L121.5 343.9 L120.4 346.4 L119.3 348.9 L118.1 351.4 L117.0 353.9 L115.9 356.4 L114.8 358.9 L113.6 361.4 L112.5 364.0 L111.4 366.5 L110.2 369.0 L110.2 369.0 L109.2 371.4 L108.2 373.8 L107.2 376.3 L106.3 378.7 L105.5 381.2 L104.6 383.7 L103.9 386.2 L103.2 388.7 L102.5 391.2 L101.9 393.8 L101.3 396.3 L100.8 398.9 L100.3 401.4 L99.9 404.0 L99.6 406.6 L99.3 409.1 L99.0 411.7 L98.8 414.3 L98.7 416.9 L98.6 419.5 L98.5 422.1 L98.5 424.7 L98.6 427.3 L98.7 429.9 L98.9 432.5 L99.1 435.1 L99.4 437.6 L99.7 440.2 L100.1 442.8 L100.5 445.4 L101.0 447.9 L101.5 450.5 L102.1 453.1 L102.8 455.6 L103.5 458.1 L104.2 460.7 L105.0 463.2 L105.9 465.7 L106.8 468.2 L107.8 470.6 L108.8 473.1 L109.9 475.5 L111.0 478.0 L112.1 480.4 L113.4 482.8 L114.6 485.1 L116.0 487.5 L117.3 489.8 L118.8 492.1 L120.2 494.4 L121.8 496.7 L123.3 498.9 L125.0 501.1 L126.6 503.3 L128.3 505.5 L130.1 507.6 L131.9 509.7 L133.8 511.8 L135.7 513.9 L137.6 515.9 L139.6 517.9 L141.6 519.9 L143.7 521.8 L145.8 523.7 L148.0 525.6 L150.2 527.4 L152.4 529.2 L154.7 530.9 L157.0 532.7 L159.4 534.3 L161.8 536.0 L164.2 537.6 L166.7 539.2 L169.2 540.7 L171.7 542.2 L174.3 543.7 L176.9 545.1 L179.5 546.4 L182.2 547.8 L184.9 549.1 L187.6 550.3 L190.3 551.5 L193.1 552.7 L195.9 553.8 L198.8 554.8 L201.6 555.9 L204.5 556.8 L207.4 557.8 L210.3 558.6 L213.3 559.5 L216.2 560.3 L219.2 561.0 L222.2 561.7 L225.2 562.4 L228.2 563.0 L231.3 563.5 L234.3 564.0 L237.4 564.5 L240.5 564.9 L243.6 565.2 L246.7 565.5 L249.8 565.8 L252.9 566.0 L256.0 566.2 L259.1 566.3 L262.3 566.3 L265.4 566.3 L268.5 566.3 L271.7 566.2 L274.8 566.1 L277.9 565.9 L281.0 565.7 L284.2 565.4 L287.3 565.0 L290.4 564.6 L293.5 564.2 L296.6 563.7 L299.7 563.2 L302.7 562.6 L305.8 562.0 L308.8 561.3 L311.9 560.6 L314.9 559.8 L317.9 559.0 L320.9 558.1 L323.8 557.2 L326.8 556.3 L329.7 555.3 L332.6 554.2 L335.5 553.1 L338.4 552.0 L341.2 550.8 L344.0 549.6 L346.8 548.3 L349.6 547.0 L352.3 545.7 L355.0 544.3 L357.7 542.9 L360.3 541.4 L362.9 539.9 L365.5 538.3 L368.1 536.7 L370.6 535.1 L373.1 533.4 L375.5 531.7 L377.9 530.0 L380.3 528.2 L382.6 526.4 L384.9 524.5 L387.2 522.7 L389.4 520.8 L391.5 518.8 L393.7 516.8 L395.8 514.8 L397.8 512.8 L399.8 510.7 L401.8 508.6 L403.7 506.5 L405.6 504.4 L407.4 502.2 L409.2 500.0 L410.9 497.8 L412.6 495.5 L414.2 493.2 L415.8 490.9 L417.4 488.6 L418.9 486.3 L420.3 483.9 L421.7 481.6 L423.1 479.2 L424.4 476.7 L425.6 474.3 L426.8 471.9 L428.0 469.4 L429.1 466.9 L430.1 464.4 L431.1 461.9 L432.0 459.4 L432.9 456.9 L432.9 456.9 L433.8 454.3 L434.7 451.6 L435.6 448.9 L436.5 446.3 L437.4 443.7 L438.3 441.0 L439.2 438.4 L440.1 435.8 L441.0 433.1 L441.9 430.5 L442.8 427.9 L443.7 425.3 L444.6 422.7 L445.5 420.1 L446.4 417.5 L447.3 414.9 L448.2 412.3 L449.0 409.7 L449.9 407.1 L450.8 404.5 L451.7 401.9 L452.6 399.4 L453.4 396.8 L454.3 394.2 L455.2 391.7 L456.1 389.1 L456.9 386.6 L457.8 384.0 L458.7 381.5 L459.5 378.9 L460.4 376.4 L461.3 373.9 L462.1 371.3 L463.0 368.8 L463.8 366.3 L464.7 363.8 L465.6 361.3 L466.4 358.7 L467.3 356.2 L468.1 353.7 L469.0 351.2 L469.8 348.7 L470.7 346.3 L471.5 343.8 L472.4 341.3 L473.2 338.8 L474.1 336.3 L474.9 333.9 L475.7 331.4 L476.6 328.9 L477.4 326.5 L478.3 324.0 L479.1 321.5 L479.9 319.1 L480.8 316.7 L481.6 314.2 L482.4 311.8 L483.3 309.3 L484.1 306.9 L484.9 304.5 L485.8 302.1 L486.6 299.6 L487.4 297.2 L488.2 294.8 L489.0 292.4 L489.9 290.0 L490.7 287.6 L491.5 285.2 L492.3 282.8 L493.1 280.4 L494.0 278.0 L494.8 275.6 L495.6 273.2 L496.4 270.9 L497.2 268.5 L498.0 266.1 L498.8 263.8 L499.6 261.4 L500.4 259.0 L501.2 256.7 L502.0 254.3 L502.8 252.0 L503.6 249.6 L504.4 247.3 L505.2 244.9 L506.0 242.6 L506.8 240.3 L507.6 237.9 L508.4 235.6 Z" fill="#297ca5" stroke="#1c3f9e" stroke-width="1.1"/>
<!-- opening: inner wall band -->
<path d="M491.9 231.4 L492.5 229.4 L493.2 227.5 L493.7 225.5 L494.3 223.5 L494.7 221.5 L495.2 219.5 L495.6 217.5 L495.9 215.4 L496.2 213.4 L496.5 211.4 L496.7 209.4 L496.9 207.4 L497.0 205.3 L497.1 203.3 L497.2 201.3 L497.2 199.3 L497.1 197.3 L497.0 195.2 L496.9 193.2 L496.7 191.2 L496.5 189.2 L496.3 187.2 L496.0 185.2 L495.6 183.2 L495.2 181.2 L494.8 179.3 L494.3 177.3 L493.8 175.3 L493.3 173.4 L492.7 171.4 L492.0 169.5 L491.3 167.6 L490.6 165.7 L489.8 163.8 L489.0 161.9 L488.2 160.0 L487.3 158.1 L486.4 156.3 L485.4 154.5 L484.4 152.6 L483.4 150.8 L482.3 149.1 L481.2 147.3 L480.1 145.5 L478.9 143.8 L477.7 142.1 L476.4 140.4 L475.1 138.7 L473.8 137.0 L472.4 135.4 L471.0 133.8 L469.6 132.2 L468.1 130.6 L466.6 129.0 L465.1 127.5 L463.6 126.0 L462.0 124.5 L460.3 123.0 L458.7 121.6 L457.0 120.2 L455.3 118.8 L453.6 117.4 L451.8 116.0 L450.0 114.7 L448.2 113.4 L446.3 112.2 L444.5 110.9 L442.6 109.7 L440.6 108.5 L438.7 107.3 L436.7 106.2 L434.7 105.1 L432.7 104.0 L430.7 103.0 L428.6 101.9 L426.5 100.9 L424.4 100.0 L422.3 99.0 L420.1 98.1 L418.0 97.3 L415.8 96.4 L413.6 95.6 L411.4 94.8 L409.2 94.0 L406.9 93.3 L404.7 92.6 L402.4 92.0 L400.1 91.3 L397.8 90.7 L395.5 90.2 L393.2 89.6 L390.9 89.1 L388.5 88.7 L386.2 88.2 L383.8 87.8 L381.5 87.4 L379.1 87.1 L376.7 86.8 L374.3 86.5 L371.9 86.3 L369.6 86.0 L367.2 85.9 L364.7 85.7 L362.3 85.6 L359.9 85.5 L357.5 85.5 L355.1 85.5 L352.7 85.5 L350.3 85.5 L347.9 85.6 L345.5 85.7 L343.1 85.9 L340.7 86.1 L338.3 86.3 L335.9 86.5 L333.5 86.8 L331.1 87.1 L328.7 87.5 L326.4 87.9 L324.0 88.3 L321.6 88.7 L319.3 89.2 L317.0 89.7 L314.6 90.2 L312.3 90.8 L310.0 91.4 L307.7 92.1 L305.5 92.7 L303.2 93.4 L301.0 94.2 L298.7 94.9 L296.5 95.7 L294.3 96.5 L292.1 97.4 L289.9 98.3 L287.8 99.2 L285.7 100.1 L283.6 101.1 L281.5 102.1 L279.4 103.1 L277.3 104.2 L275.3 105.3 L273.3 106.4 L271.3 107.5 L269.4 108.7 L267.4 109.9 L265.5 111.1 L263.6 112.4 L261.8 113.6 L259.9 114.9 L258.1 116.3 L256.4 117.6 L254.6 119.0 L252.9 120.4 L251.2 121.8 L249.5 123.3 L247.9 124.8 L246.3 126.3 L244.7 127.8 L243.2 129.3 L241.7 130.9 L240.2 132.5 L238.8 134.1 L237.3 135.7 L236.0 137.4 L234.6 139.0 L233.3 140.7 L232.1 142.4 L230.8 144.2 L229.6 145.9 L228.5 147.7 L227.3 149.4 L226.3 151.2 L225.2 153.0 L224.2 154.9 L223.2 156.7 L222.3 158.5 L221.4 160.4 L220.5 162.3 L220.5 162.3 L219.6 164.5 L218.6 166.7 L217.6 169.0 L216.6 171.2 L215.6 173.4 L214.6 175.7 L213.6 177.9 L212.6 180.2 L211.6 182.4 L210.6 184.7 L209.6 186.9 L208.6 189.2 L207.6 191.5 L206.6 193.7 L205.6 196.0 L204.6 198.3 L203.6 200.5 L202.6 202.8 L201.6 205.1 L200.6 207.4 L199.6 209.7 L198.6 212.0 L197.5 214.3 L196.5 216.6 L195.5 218.9 L194.5 221.2 L193.5 223.5 L192.4 225.8 L191.4 228.1 L190.4 230.4 L189.4 232.7 L188.3 235.1 L187.3 237.4 L186.3 239.7 L185.2 242.1 L184.2 244.4 L183.2 246.8 L182.1 249.1 L181.1 251.5 L180.1 253.8 L179.0 256.2 L178.0 258.5 L176.9 260.9 L175.9 263.3 L174.8 265.6 L173.8 268.0 L172.7 270.4 L171.7 272.8 L170.6 275.2 L169.6 277.5 L168.5 279.9 L167.4 282.3 L166.4 284.7 L165.3 287.1 L164.2 289.5 L163.2 292.0 L162.1 294.4 L161.0 296.8 L160.0 299.2 L158.9 301.6 L157.8 304.1 L156.7 306.5 L155.7 308.9 L154.6 311.4 L153.5 313.8 L152.4 316.3 L151.3 318.7 L150.3 321.2 L149.2 323.6 L148.1 326.1 L147.0 328.6 L145.9 331.0 L144.8 333.5 L143.7 336.0 L142.6 338.5 L141.5 340.9 L140.4 343.4 L139.3 345.9 L138.2 348.4 L137.1 350.9 L136.0 353.4 L134.9 355.9 L133.8 358.4 L132.6 360.9 L131.5 363.5 L130.4 366.0 L129.3 368.5 L128.2 371.0 L127.1 373.6 L127.1 373.6 L126.1 375.7 L125.2 377.9 L124.4 380.1 L123.6 382.3 L122.8 384.5 L122.1 386.7 L121.4 389.0 L120.8 391.2 L120.2 393.5 L119.7 395.7 L119.2 398.0 L118.8 400.3 L118.4 402.6 L118.0 404.9 L117.7 407.2 L117.4 409.5 L117.2 411.8 L117.1 414.1 L116.9 416.4 L116.9 418.7 L116.8 421.0 L116.8 423.4 L116.9 425.7 L117.0 428.0 L117.2 430.3 L117.4 432.6 L117.7 434.9 L118.0 437.2 L118.3 439.5 L118.7 441.8 L119.2 444.1 L119.7 446.4 L120.2 448.7 L120.8 450.9 L121.4 453.2 L122.1 455.4 L122.8 457.7 L123.6 459.9 L124.4 462.1 L125.3 464.3 L126.2 466.5 L127.2 468.7 L128.2 470.8 L129.3 473.0 L130.4 475.1 L131.5 477.2 L132.7 479.3 L133.9 481.4 L135.2 483.4 L136.5 485.5 L137.9 487.5 L139.3 489.5 L140.8 491.5 L142.3 493.4 L143.8 495.3 L145.4 497.2 L147.0 499.1 L148.6 500.9 L150.3 502.8 L152.1 504.6 L153.9 506.3 L155.7 508.1 L157.5 509.8 L159.4 511.5 L161.3 513.1 L163.3 514.7 L165.3 516.3 L167.3 517.9 L169.4 519.4 L171.5 520.9 L173.7 522.4 L175.8 523.8 L178.0 525.2 L180.3 526.6 L182.5 527.9 L184.8 529.2 L187.1 530.4 L189.5 531.6 L191.8 532.8 L194.2 534.0 L196.7 535.1 L199.1 536.1 L201.6 537.1 L204.1 538.1 L206.6 539.1 L209.1 540.0 L211.7 540.8 L214.3 541.7 L216.9 542.4 L219.5 543.2 L222.1 543.9 L224.8 544.5 L227.5 545.2 L230.1 545.7 L232.8 546.3 L235.5 546.8 L238.3 547.2 L241.0 547.6 L243.7 548.0 L246.5 548.3 L249.2 548.6 L252.0 548.8 L254.8 549.0 L257.5 549.1 L260.3 549.2 L263.1 549.3 L265.9 549.3 L268.7 549.2 L271.4 549.2 L274.2 549.0 L277.0 548.9 L279.8 548.7 L282.6 548.4 L285.3 548.1 L288.1 547.8 L290.8 547.4 L293.6 547.0 L296.3 546.5 L299.1 546.0 L301.8 545.4 L304.5 544.8 L307.2 544.2 L309.9 543.5 L312.6 542.8 L315.2 542.0 L317.9 541.2 L320.5 540.4 L323.1 539.5 L325.7 538.6 L328.2 537.6 L330.8 536.6 L333.3 535.5 L335.8 534.5 L338.3 533.3 L340.8 532.2 L343.2 531.0 L345.6 529.7 L348.0 528.5 L350.3 527.2 L352.7 525.8 L355.0 524.5 L357.2 523.0 L359.5 521.6 L361.7 520.1 L363.9 518.6 L366.0 517.1 L368.1 515.5 L370.2 513.9 L372.3 512.2 L374.3 510.6 L376.2 508.9 L378.2 507.2 L380.1 505.4 L382.0 503.6 L383.8 501.8 L385.6 500.0 L387.3 498.1 L389.1 496.2 L390.7 494.3 L392.4 492.4 L394.0 490.4 L395.5 488.5 L397.0 486.5 L398.5 484.4 L399.9 482.4 L401.3 480.3 L402.7 478.3 L404.0 476.2 L405.2 474.1 L406.4 471.9 L407.6 469.8 L408.7 467.6 L409.8 465.4 L410.9 463.2 L411.8 461.0 L412.8 458.8 L413.7 456.6 L414.5 454.4 L415.3 452.1 L415.3 452.1 L416.3 449.5 L417.2 446.8 L418.1 444.2 L419.0 441.5 L419.9 438.9 L420.8 436.3 L421.7 433.6 L422.6 431.0 L423.6 428.4 L424.5 425.8 L425.4 423.2 L426.3 420.6 L427.2 418.0 L428.1 415.4 L429.0 412.8 L429.9 410.2 L430.8 407.6 L431.7 405.0 L432.6 402.4 L433.5 399.9 L434.3 397.3 L435.2 394.7 L436.1 392.2 L437.0 389.6 L437.9 387.1 L438.8 384.5 L439.7 382.0 L440.5 379.4 L441.4 376.9 L442.3 374.4 L443.2 371.8 L444.1 369.3 L444.9 366.8 L445.8 364.3 L446.7 361.7 L447.5 359.2 L448.4 356.7 L449.3 354.2 L450.2 351.7 L451.0 349.2 L451.9 346.7 L452.7 344.2 L453.6 341.8 L454.5 339.3 L455.3 336.8 L456.2 334.3 L457.0 331.9 L457.9 329.4 L458.7 326.9 L459.6 324.5 L460.5 322.0 L461.3 319.6 L462.2 317.1 L463.0 314.7 L463.8 312.2 L464.7 309.8 L465.5 307.4 L466.4 304.9 L467.2 302.5 L468.1 300.1 L468.9 297.7 L469.7 295.3 L470.6 292.8 L471.4 290.4 L472.2 288.0 L473.1 285.6 L473.9 283.2 L474.7 280.8 L475.6 278.5 L476.4 276.1 L477.2 273.7 L478.0 271.3 L478.9 268.9 L479.7 266.6 L480.5 264.2 L481.3 261.8 L482.1 259.5 L483.0 257.1 L483.8 254.8 L484.6 252.4 L485.4 250.1 L486.2 247.7 L487.0 245.4 L487.8 243.0 L488.6 240.7 L489.5 238.4 L490.3 236.1 L491.1 233.7 L491.9 231.4 Z" fill="none" stroke="#1c3f9e" stroke-width="3.0"/>
<path d="M491.9 231.4 L492.5 229.4 L493.2 227.5 L493.7 225.5 L494.3 223.5 L494.7 221.5 L495.2 219.5 L495.6 217.5 L495.9 215.4 L496.2 213.4 L496.5 211.4 L496.7 209.4 L496.9 207.4 L497.0 205.3 L497.1 203.3 L497.2 201.3 L497.2 199.3 L497.1 197.3 L497.0 195.2 L496.9 193.2 L496.7 191.2 L496.5 189.2 L496.3 187.2 L496.0 185.2 L495.6 183.2 L495.2 181.2 L494.8 179.3 L494.3 177.3 L493.8 175.3 L493.3 173.4 L492.7 171.4 L492.0 169.5 L491.3 167.6 L490.6 165.7 L489.8 163.8 L489.0 161.9 L488.2 160.0 L487.3 158.1 L486.4 156.3 L485.4 154.5 L484.4 152.6 L483.4 150.8 L482.3 149.1 L481.2 147.3 L480.1 145.5 L478.9 143.8 L477.7 142.1 L476.4 140.4 L475.1 138.7 L473.8 137.0 L472.4 135.4 L471.0 133.8 L469.6 132.2 L468.1 130.6 L466.6 129.0 L465.1 127.5 L463.6 126.0 L462.0 124.5 L460.3 123.0 L458.7 121.6 L457.0 120.2 L455.3 118.8 L453.6 117.4 L451.8 116.0 L450.0 114.7 L448.2 113.4 L446.3 112.2 L444.5 110.9 L442.6 109.7 L440.6 108.5 L438.7 107.3 L436.7 106.2 L434.7 105.1 L432.7 104.0 L430.7 103.0 L428.6 101.9 L426.5 100.9 L424.4 100.0 L422.3 99.0 L420.1 98.1 L418.0 97.3 L415.8 96.4 L413.6 95.6 L411.4 94.8 L409.2 94.0 L406.9 93.3 L404.7 92.6 L402.4 92.0 L400.1 91.3 L397.8 90.7 L395.5 90.2 L393.2 89.6 L390.9 89.1 L388.5 88.7 L386.2 88.2 L383.8 87.8 L381.5 87.4 L379.1 87.1 L376.7 86.8 L374.3 86.5 L371.9 86.3 L369.6 86.0 L367.2 85.9 L364.7 85.7 L362.3 85.6 L359.9 85.5 L357.5 85.5 L355.1 85.5 L352.7 85.5 L350.3 85.5 L347.9 85.6 L345.5 85.7 L343.1 85.9 L340.7 86.1 L338.3 86.3 L335.9 86.5 L333.5 86.8 L331.1 87.1 L328.7 87.5 L326.4 87.9 L324.0 88.3 L321.6 88.7 L319.3 89.2 L317.0 89.7 L314.6 90.2 L312.3 90.8 L310.0 91.4 L307.7 92.1 L305.5 92.7 L303.2 93.4 L301.0 94.2 L298.7 94.9 L296.5 95.7 L294.3 96.5 L292.1 97.4 L289.9 98.3 L287.8 99.2 L285.7 100.1 L283.6 101.1 L281.5 102.1 L279.4 103.1 L277.3 104.2 L275.3 105.3 L273.3 106.4 L271.3 107.5 L269.4 108.7 L267.4 109.9 L265.5 111.1 L263.6 112.4 L261.8 113.6 L259.9 114.9 L258.1 116.3 L256.4 117.6 L254.6 119.0 L252.9 120.4 L251.2 121.8 L249.5 123.3 L247.9 124.8 L246.3 126.3 L244.7 127.8 L243.2 129.3 L241.7 130.9 L240.2 132.5 L238.8 134.1 L237.3 135.7 L236.0 137.4 L234.6 139.0 L233.3 140.7 L232.1 142.4 L230.8 144.2 L229.6 145.9 L228.5 147.7 L227.3 149.4 L226.3 151.2 L225.2 153.0 L224.2 154.9 L223.2 156.7 L222.3 158.5 L221.4 160.4 L220.5 162.3 L220.5 162.3 L219.6 164.5 L218.6 166.7 L217.6 169.0 L216.6 171.2 L215.6 173.4 L214.6 175.7 L213.6 177.9 L212.6 180.2 L211.6 182.4 L210.6 184.7 L209.6 186.9 L208.6 189.2 L207.6 191.5 L206.6 193.7 L205.6 196.0 L204.6 198.3 L203.6 200.5 L202.6 202.8 L201.6 205.1 L200.6 207.4 L199.6 209.7 L198.6 212.0 L197.5 214.3 L196.5 216.6 L195.5 218.9 L194.5 221.2 L193.5 223.5 L192.4 225.8 L191.4 228.1 L190.4 230.4 L189.4 232.7 L188.3 235.1 L187.3 237.4 L186.3 239.7 L185.2 242.1 L184.2 244.4 L183.2 246.8 L182.1 249.1 L181.1 251.5 L180.1 253.8 L179.0 256.2 L178.0 258.5 L176.9 260.9 L175.9 263.3 L174.8 265.6 L173.8 268.0 L172.7 270.4 L171.7 272.8 L170.6 275.2 L169.6 277.5 L168.5 279.9 L167.4 282.3 L166.4 284.7 L165.3 287.1 L164.2 289.5 L163.2 292.0 L162.1 294.4 L161.0 296.8 L160.0 299.2 L158.9 301.6 L157.8 304.1 L156.7 306.5 L155.7 308.9 L154.6 311.4 L153.5 313.8 L152.4 316.3 L151.3 318.7 L150.3 321.2 L149.2 323.6 L148.1 326.1 L147.0 328.6 L145.9 331.0 L144.8 333.5 L143.7 336.0 L142.6 338.5 L141.5 340.9 L140.4 343.4 L139.3 345.9 L138.2 348.4 L137.1 350.9 L136.0 353.4 L134.9 355.9 L133.8 358.4 L132.6 360.9 L131.5 363.5 L130.4 366.0 L129.3 368.5 L128.2 371.0 L127.1 373.6 L127.1 373.6 L126.1 375.7 L125.2 377.9 L124.4 380.1 L123.6 382.3 L122.8 384.5 L122.1 386.7 L121.4 389.0 L120.8 391.2 L120.2 393.5 L119.7 395.7 L119.2 398.0 L118.8 400.3 L118.4 402.6 L118.0 404.9 L117.7 407.2 L117.4 409.5 L117.2 411.8 L117.1 414.1 L116.9 416.4 L116.9 418.7 L116.8 421.0 L116.8 423.4 L116.9 425.7 L117.0 428.0 L117.2 430.3 L117.4 432.6 L117.7 434.9 L118.0 437.2 L118.3 439.5 L118.7 441.8 L119.2 444.1 L119.7 446.4 L120.2 448.7 L120.8 450.9 L121.4 453.2 L122.1 455.4 L122.8 457.7 L123.6 459.9 L124.4 462.1 L125.3 464.3 L126.2 466.5 L127.2 468.7 L128.2 470.8 L129.3 473.0 L130.4 475.1 L131.5 477.2 L132.7 479.3 L133.9 481.4 L135.2 483.4 L136.5 485.5 L137.9 487.5 L139.3 489.5 L140.8 491.5 L142.3 493.4 L143.8 495.3 L145.4 497.2 L147.0 499.1 L148.6 500.9 L150.3 502.8 L152.1 504.6 L153.9 506.3 L155.7 508.1 L157.5 509.8 L159.4 511.5 L161.3 513.1 L163.3 514.7 L165.3 516.3 L167.3 517.9 L169.4 519.4 L171.5 520.9 L173.7 522.4 L175.8 523.8 L178.0 525.2 L180.3 526.6 L182.5 527.9 L184.8 529.2 L187.1 530.4 L189.5 531.6 L191.8 532.8 L194.2 534.0 L196.7 535.1 L199.1 536.1 L201.6 537.1 L204.1 538.1 L206.6 539.1 L209.1 540.0 L211.7 540.8 L214.3 541.7 L216.9 542.4 L219.5 543.2 L222.1 543.9 L224.8 544.5 L227.5 545.2 L230.1 545.7 L232.8 546.3 L235.5 546.8 L238.3 547.2 L241.0 547.6 L243.7 548.0 L246.5 548.3 L249.2 548.6 L252.0 548.8 L254.8 549.0 L257.5 549.1 L260.3 549.2 L263.1 549.3 L265.9 549.3 L268.7 549.2 L271.4 549.2 L274.2 549.0 L277.0 548.9 L279.8 548.7 L282.6 548.4 L285.3 548.1 L288.1 547.8 L290.8 547.4 L293.6 547.0 L296.3 546.5 L299.1 546.0 L301.8 545.4 L304.5 544.8 L307.2 544.2 L309.9 543.5 L312.6 542.8 L315.2 542.0 L317.9 541.2 L320.5 540.4 L323.1 539.5 L325.7 538.6 L328.2 537.6 L330.8 536.6 L333.3 535.5 L335.8 534.5 L338.3 533.3 L340.8 532.2 L343.2 531.0 L345.6 529.7 L348.0 528.5 L350.3 527.2 L352.7 525.8 L355.0 524.5 L357.2 523.0 L359.5 521.6 L361.7 520.1 L363.9 518.6 L366.0 517.1 L368.1 515.5 L370.2 513.9 L372.3 512.2 L374.3 510.6 L376.2 508.9 L378.2 507.2 L380.1 505.4 L382.0 503.6 L383.8 501.8 L385.6 500.0 L387.3 498.1 L389.1 496.2 L390.7 494.3 L392.4 492.4 L394.0 490.4 L395.5 488.5 L397.0 486.5 L398.5 484.4 L399.9 482.4 L401.3 480.3 L402.7 478.3 L404.0 476.2 L405.2 474.1 L406.4 471.9 L407.6 469.8 L408.7 467.6 L409.8 465.4 L410.9 463.2 L411.8 461.0 L412.8 458.8 L413.7 456.6 L414.5 454.4 L415.3 452.1 L415.3 452.1 L416.3 449.5 L417.2 446.8 L418.1 444.2 L419.0 441.5 L419.9 438.9 L420.8 436.3 L421.7 433.6 L422.6 431.0 L423.6 428.4 L424.5 425.8 L425.4 423.2 L426.3 420.6 L427.2 418.0 L428.1 415.4 L429.0 412.8 L429.9 410.2 L430.8 407.6 L431.7 405.0 L432.6 402.4 L433.5 399.9 L434.3 397.3 L435.2 394.7 L436.1 392.2 L437.0 389.6 L437.9 387.1 L438.8 384.5 L439.7 382.0 L440.5 379.4 L441.4 376.9 L442.3 374.4 L443.2 371.8 L444.1 369.3 L444.9 366.8 L445.8 364.3 L446.7 361.7 L447.5 359.2 L448.4 356.7 L449.3 354.2 L450.2 351.7 L451.0 349.2 L451.9 346.7 L452.7 344.2 L453.6 341.8 L454.5 339.3 L455.3 336.8 L456.2 334.3 L457.0 331.9 L457.9 329.4 L458.7 326.9 L459.6 324.5 L460.5 322.0 L461.3 319.6 L462.2 317.1 L463.0 314.7 L463.8 312.2 L464.7 309.8 L465.5 307.4 L466.4 304.9 L467.2 302.5 L468.1 300.1 L468.9 297.7 L469.7 295.3 L470.6 292.8 L471.4 290.4 L472.2 288.0 L473.1 285.6 L473.9 283.2 L474.7 280.8 L475.6 278.5 L476.4 276.1 L477.2 273.7 L478.0 271.3 L478.9 268.9 L479.7 266.6 L480.5 264.2 L481.3 261.8 L482.1 259.5 L483.0 257.1 L483.8 254.8 L484.6 252.4 L485.4 250.1 L486.2 247.7 L487.0 245.4 L487.8 243.0 L488.6 240.7 L489.5 238.4 L490.3 236.1 L491.1 233.7 L491.9 231.4 Z" fill="url(#gBand)"/>
<g clip-path="url(#cIn)">
  <path d="M489.6 256.8 L490.3 254.9 L490.9 252.9 L491.4 250.9 L492.0 249.0 L492.4 247.0 L492.9 245.0 L493.3 243.0 L493.6 241.0 L493.9 239.0 L494.2 237.0 L494.4 235.0 L494.6 233.0 L494.7 231.0 L494.8 229.0 L494.8 227.0 L494.8 225.0 L494.8 223.1 L494.7 221.1 L494.6 219.1 L494.4 217.1 L494.2 215.1 L494.0 213.1 L493.7 211.1 L493.3 209.2 L493.0 207.2 L492.5 205.3 L492.1 203.3 L491.6 201.4 L491.0 199.4 L490.4 197.5 L489.8 195.6 L489.1 193.7 L488.4 191.8 L487.7 189.9 L486.9 188.1 L486.1 186.2 L485.2 184.4 L484.3 182.6 L483.4 180.7 L482.4 179.0 L481.4 177.2 L480.3 175.4 L479.2 173.7 L478.1 171.9 L477.0 170.2 L475.8 168.5 L474.5 166.8 L473.3 165.2 L472.0 163.5 L470.6 161.9 L469.3 160.3 L467.8 158.7 L466.4 157.1 L464.9 155.6 L463.5 154.1 L461.9 152.6 L460.4 151.1 L458.8 149.7 L457.2 148.2 L455.5 146.8 L453.8 145.4 L452.1 144.1 L450.4 142.7 L448.6 141.4 L446.8 140.2 L445.0 138.9 L443.2 137.7 L441.3 136.5 L439.4 135.3 L437.5 134.1 L435.6 133.0 L433.6 131.9 L431.7 130.8 L429.7 129.8 L427.6 128.8 L425.6 127.8 L423.5 126.9 L421.5 125.9 L419.4 125.0 L417.2 124.2 L415.1 123.3 L413.0 122.5 L410.8 121.7 L408.6 121.0 L406.4 120.3 L404.2 119.6 L402.0 118.9 L399.7 118.3 L397.5 117.7 L395.2 117.2 L392.9 116.6 L390.7 116.1 L388.4 115.7 L386.1 115.2 L383.7 114.8 L381.4 114.5 L379.1 114.1 L376.8 113.8 L374.4 113.5 L372.1 113.3 L369.7 113.1 L367.4 112.9 L365.0 112.8 L362.7 112.6 L360.3 112.6 L357.9 112.5 L355.6 112.5 L353.2 112.5 L350.8 112.6 L348.5 112.7 L346.1 112.8 L343.7 112.9 L341.4 113.1 L339.0 113.3 L336.7 113.6 L334.3 113.9 L332.0 114.2 L329.7 114.5 L327.4 114.9 L325.0 115.3 L322.7 115.7 L320.4 116.2 L318.1 116.7 L315.9 117.2 L313.6 117.8 L311.3 118.4 L309.1 119.0 L306.9 119.7 L304.6 120.4 L302.4 121.1 L300.2 121.9 L298.1 122.7 L295.9 123.5 L293.8 124.3 L291.6 125.2 L289.5 126.1 L287.4 127.0 L285.4 128.0 L283.3 129.0 L281.3 130.0 L279.3 131.0 L277.3 132.1 L275.3 133.2 L273.4 134.4 L271.5 135.5 L269.6 136.7 L267.7 137.9 L265.8 139.1 L264.0 140.4 L262.2 141.7 L260.5 143.0 L258.7 144.4 L257.0 145.7 L255.3 147.1 L253.6 148.5 L252.0 150.0 L250.4 151.4 L248.8 152.9 L247.3 154.4 L245.8 155.9 L244.3 157.5 L242.9 159.0 L241.5 160.6 L240.1 162.3 L238.7 163.9 L237.4 165.5 L236.1 167.2 L234.9 168.9 L233.7 170.6 L232.5 172.3 L231.4 174.1 L230.3 175.8 L229.2 177.6 L228.2 179.4 L227.2 181.2 L226.2 183.0 L225.3 184.8 L224.5 186.7 L223.6 188.5 L223.6 188.5 L222.7 190.7 L221.7 192.9 L220.7 195.1 L219.8 197.4 L218.8 199.6 L217.8 201.8 L216.9 204.0 L215.9 206.2 L214.9 208.4 L213.9 210.7 L213.0 212.9 L212.0 215.1 L211.0 217.4 L210.0 219.6 L209.0 221.8 L208.1 224.1 L207.1 226.3 L206.1 228.6 L205.1 230.9 L204.1 233.1 L203.1 235.4 L202.1 237.6 L201.1 239.9 L200.1 242.2 L199.1 244.5 L198.1 246.7 L197.1 249.0 L196.1 251.3 L195.1 253.6 L194.1 255.9 L193.1 258.2 L192.1 260.5 L191.1 262.8 L190.1 265.1 L189.1 267.4 L188.1 269.7 L187.1 272.0 L186.1 274.3 L185.0 276.7 L184.0 279.0 L183.0 281.3 L182.0 283.6 L181.0 286.0 L179.9 288.3 L178.9 290.7 L177.9 293.0 L176.9 295.3 L175.8 297.7 L174.8 300.1 L173.8 302.4 L172.7 304.8 L171.7 307.1 L170.7 309.5 L169.6 311.9 L168.6 314.3 L167.5 316.6 L166.5 319.0 L165.5 321.4 L164.4 323.8 L163.4 326.2 L162.3 328.6 L161.3 331.0 L160.2 333.4 L159.2 335.8 L158.1 338.2 L157.0 340.6 L156.0 343.1 L154.9 345.5 L153.9 347.9 L152.8 350.3 L151.7 352.8 L150.7 355.2 L149.6 357.6 L148.5 360.1 L147.5 362.5 L146.4 365.0 L145.3 367.4 L144.2 369.9 L143.2 372.4 L142.1 374.8 L141.0 377.3 L139.9 379.8 L138.8 382.3 L137.7 384.7 L136.7 387.2 L135.6 389.7 L134.5 392.2 L133.4 394.7 L132.3 397.2 L132.3 397.2 L131.4 399.3 L130.5 401.5 L129.7 403.6 L128.9 405.8 L128.2 408.0 L127.5 410.2 L126.8 412.4 L126.2 414.6 L125.6 416.8 L125.1 419.0 L124.6 421.3 L124.2 423.5 L123.8 425.8 L123.5 428.1 L123.2 430.3 L122.9 432.6 L122.7 434.9 L122.6 437.1 L122.4 439.4 L122.4 441.7 L122.3 444.0 L122.4 446.3 L122.4 448.6 L122.6 450.8 L122.7 453.1 L122.9 455.4 L123.2 457.7 L123.5 459.9 L123.8 462.2 L124.2 464.5 L124.7 466.7 L125.2 469.0 L125.7 471.2 L126.3 473.4 L126.9 475.7 L127.6 477.9 L128.3 480.1 L129.1 482.3 L129.9 484.5 L130.7 486.6 L131.6 488.8 L132.6 490.9 L133.6 493.1 L134.6 495.2 L135.7 497.3 L136.8 499.3 L138.0 501.4 L139.2 503.4 L140.4 505.5 L141.7 507.5 L143.1 509.4 L144.4 511.4 L145.9 513.3 L147.3 515.3 L148.8 517.2 L150.4 519.0 L152.0 520.9 L153.6 522.7 L155.3 524.5 L157.0 526.3 L158.7 528.0 L160.5 529.7 L162.3 531.4 L164.2 533.0 L166.0 534.7 L168.0 536.3 L169.9 537.8 L171.9 539.4 L173.9 540.9 L176.0 542.4 L178.1 543.8 L180.2 545.2 L182.4 546.6 L184.6 547.9 L186.8 549.2 L189.0 550.5 L191.3 551.7 L193.6 552.9 L195.9 554.1 L198.3 555.2 L200.6 556.3 L203.0 557.3 L205.4 558.3 L207.9 559.3 L210.4 560.2 L212.8 561.1 L215.4 562.0 L217.9 562.8 L220.4 563.5 L223.0 564.3 L225.6 565.0 L228.2 565.6 L230.8 566.2 L233.4 566.8 L236.0 567.3 L238.7 567.8 L241.3 568.2 L244.0 568.6 L246.7 569.0 L249.4 569.3 L252.1 569.5 L254.8 569.8 L257.5 569.9 L260.2 570.1 L262.9 570.2 L265.6 570.2 L268.3 570.2 L271.1 570.2 L273.8 570.1 L276.5 570.0 L279.2 569.8 L281.9 569.6 L284.7 569.4 L287.4 569.1 L290.1 568.8 L292.8 568.4 L295.5 568.0 L298.1 567.5 L300.8 567.0 L303.5 566.5 L306.1 565.9 L308.8 565.2 L311.4 564.6 L314.0 563.9 L316.6 563.1 L319.2 562.3 L321.7 561.5 L324.3 560.6 L326.8 559.7 L329.3 558.7 L331.8 557.8 L334.3 556.7 L336.7 555.7 L339.2 554.6 L341.6 553.4 L344.0 552.2 L346.3 551.0 L348.6 549.8 L351.0 548.5 L353.2 547.2 L355.5 545.8 L357.7 544.4 L359.9 543.0 L362.1 541.5 L364.2 540.1 L366.3 538.5 L368.4 537.0 L370.4 535.4 L372.4 533.8 L374.4 532.1 L376.3 530.5 L378.2 528.8 L380.1 527.1 L381.9 525.3 L383.7 523.5 L385.4 521.7 L387.2 519.9 L388.8 518.0 L390.5 516.1 L392.1 514.2 L393.6 512.3 L395.2 510.4 L396.7 508.4 L398.1 506.4 L399.5 504.4 L400.8 502.4 L402.2 500.3 L403.4 498.3 L404.7 496.2 L405.9 494.1 L407.0 492.0 L408.1 489.8 L409.2 487.7 L410.2 485.5 L411.1 483.4 L412.1 481.2 L412.9 479.0 L413.8 476.8 L414.6 474.6 L414.6 474.6 L415.5 471.9 L416.4 469.3 L417.3 466.7 L418.2 464.1 L419.0 461.5 L419.9 458.9 L420.8 456.4 L421.7 453.8 L422.6 451.2 L423.5 448.6 L424.4 446.0 L425.3 443.5 L426.2 440.9 L427.0 438.4 L427.9 435.8 L428.8 433.2 L429.7 430.7 L430.6 428.1 L431.4 425.6 L432.3 423.1 L433.2 420.5 L434.1 418.0 L434.9 415.5 L435.8 413.0 L436.7 410.4 L437.5 407.9 L438.4 405.4 L439.3 402.9 L440.1 400.4 L441.0 397.9 L441.8 395.4 L442.7 392.9 L443.6 390.4 L444.4 387.9 L445.3 385.5 L446.1 383.0 L447.0 380.5 L447.8 378.0 L448.7 375.6 L449.5 373.1 L450.4 370.7 L451.2 368.2 L452.1 365.7 L452.9 363.3 L453.8 360.9 L454.6 358.4 L455.4 356.0 L456.3 353.5 L457.1 351.1 L457.9 348.7 L458.8 346.3 L459.6 343.8 L460.5 341.4 L461.3 339.0 L462.1 336.6 L462.9 334.2 L463.8 331.8 L464.6 329.4 L465.4 327.0 L466.2 324.6 L467.1 322.2 L467.9 319.9 L468.7 317.5 L469.5 315.1 L470.3 312.7 L471.2 310.4 L472.0 308.0 L472.8 305.6 L473.6 303.3 L474.4 300.9 L475.2 298.6 L476.0 296.2 L476.8 293.9 L477.7 291.5 L478.5 289.2 L479.3 286.9 L480.1 284.5 L480.9 282.2 L481.7 279.9 L482.5 277.5 L483.3 275.2 L484.1 272.9 L484.9 270.6 L485.7 268.3 L486.5 266.0 L487.3 263.7 L488.0 261.4 L488.8 259.1 L489.6 256.8 Z" fill="none" stroke="#1c331b" stroke-width="14" filter="url(#blur3)" opacity="0.85"/>
  <path d="M489.6 256.8 L490.3 254.9 L490.9 252.9 L491.4 250.9 L492.0 249.0 L492.4 247.0 L492.9 245.0 L493.3 243.0 L493.6 241.0 L493.9 239.0 L494.2 237.0 L494.4 235.0 L494.6 233.0 L494.7 231.0 L494.8 229.0 L494.8 227.0 L494.8 225.0 L494.8 223.1 L494.7 221.1 L494.6 219.1 L494.4 217.1 L494.2 215.1 L494.0 213.1 L493.7 211.1 L493.3 209.2 L493.0 207.2 L492.5 205.3 L492.1 203.3 L491.6 201.4 L491.0 199.4 L490.4 197.5 L489.8 195.6 L489.1 193.7 L488.4 191.8 L487.7 189.9 L486.9 188.1 L486.1 186.2 L485.2 184.4 L484.3 182.6 L483.4 180.7 L482.4 179.0 L481.4 177.2 L480.3 175.4 L479.2 173.7 L478.1 171.9 L477.0 170.2 L475.8 168.5 L474.5 166.8 L473.3 165.2 L472.0 163.5 L470.6 161.9 L469.3 160.3 L467.8 158.7 L466.4 157.1 L464.9 155.6 L463.5 154.1 L461.9 152.6 L460.4 151.1 L458.8 149.7 L457.2 148.2 L455.5 146.8 L453.8 145.4 L452.1 144.1 L450.4 142.7 L448.6 141.4 L446.8 140.2 L445.0 138.9 L443.2 137.7 L441.3 136.5 L439.4 135.3 L437.5 134.1 L435.6 133.0 L433.6 131.9 L431.7 130.8 L429.7 129.8 L427.6 128.8 L425.6 127.8 L423.5 126.9 L421.5 125.9 L419.4 125.0 L417.2 124.2 L415.1 123.3 L413.0 122.5 L410.8 121.7 L408.6 121.0 L406.4 120.3 L404.2 119.6 L402.0 118.9 L399.7 118.3 L397.5 117.7 L395.2 117.2 L392.9 116.6 L390.7 116.1 L388.4 115.7 L386.1 115.2 L383.7 114.8 L381.4 114.5 L379.1 114.1 L376.8 113.8 L374.4 113.5 L372.1 113.3 L369.7 113.1 L367.4 112.9 L365.0 112.8 L362.7 112.6 L360.3 112.6 L357.9 112.5 L355.6 112.5 L353.2 112.5 L350.8 112.6 L348.5 112.7 L346.1 112.8 L343.7 112.9 L341.4 113.1 L339.0 113.3 L336.7 113.6 L334.3 113.9 L332.0 114.2 L329.7 114.5 L327.4 114.9 L325.0 115.3 L322.7 115.7 L320.4 116.2 L318.1 116.7 L315.9 117.2 L313.6 117.8 L311.3 118.4 L309.1 119.0 L306.9 119.7 L304.6 120.4 L302.4 121.1 L300.2 121.9 L298.1 122.7 L295.9 123.5 L293.8 124.3 L291.6 125.2 L289.5 126.1 L287.4 127.0 L285.4 128.0 L283.3 129.0 L281.3 130.0 L279.3 131.0 L277.3 132.1 L275.3 133.2 L273.4 134.4 L271.5 135.5 L269.6 136.7 L267.7 137.9 L265.8 139.1 L264.0 140.4 L262.2 141.7 L260.5 143.0 L258.7 144.4 L257.0 145.7 L255.3 147.1 L253.6 148.5 L252.0 150.0 L250.4 151.4 L248.8 152.9 L247.3 154.4 L245.8 155.9 L244.3 157.5 L242.9 159.0 L241.5 160.6 L240.1 162.3 L238.7 163.9 L237.4 165.5 L236.1 167.2 L234.9 168.9 L233.7 170.6 L232.5 172.3 L231.4 174.1 L230.3 175.8 L229.2 177.6 L228.2 179.4 L227.2 181.2 L226.2 183.0 L225.3 184.8 L224.5 186.7 L223.6 188.5 L223.6 188.5 L222.7 190.7 L221.7 192.9 L220.7 195.1 L219.8 197.4 L218.8 199.6 L217.8 201.8 L216.9 204.0 L215.9 206.2 L214.9 208.4 L213.9 210.7 L213.0 212.9 L212.0 215.1 L211.0 217.4 L210.0 219.6 L209.0 221.8 L208.1 224.1 L207.1 226.3 L206.1 228.6 L205.1 230.9 L204.1 233.1 L203.1 235.4 L202.1 237.6 L201.1 239.9 L200.1 242.2 L199.1 244.5 L198.1 246.7 L197.1 249.0 L196.1 251.3 L195.1 253.6 L194.1 255.9 L193.1 258.2 L192.1 260.5 L191.1 262.8 L190.1 265.1 L189.1 267.4 L188.1 269.7 L187.1 272.0 L186.1 274.3 L185.0 276.7 L184.0 279.0 L183.0 281.3 L182.0 283.6 L181.0 286.0 L179.9 288.3 L178.9 290.7 L177.9 293.0 L176.9 295.3 L175.8 297.7 L174.8 300.1 L173.8 302.4 L172.7 304.8 L171.7 307.1 L170.7 309.5 L169.6 311.9 L168.6 314.3 L167.5 316.6 L166.5 319.0 L165.5 321.4 L164.4 323.8 L163.4 326.2 L162.3 328.6 L161.3 331.0 L160.2 333.4 L159.2 335.8 L158.1 338.2 L157.0 340.6 L156.0 343.1 L154.9 345.5 L153.9 347.9 L152.8 350.3 L151.7 352.8 L150.7 355.2 L149.6 357.6 L148.5 360.1 L147.5 362.5 L146.4 365.0 L145.3 367.4 L144.2 369.9 L143.2 372.4 L142.1 374.8 L141.0 377.3 L139.9 379.8 L138.8 382.3 L137.7 384.7 L136.7 387.2 L135.6 389.7 L134.5 392.2 L133.4 394.7 L132.3 397.2 L132.3 397.2 L131.4 399.3 L130.5 401.5 L129.7 403.6 L128.9 405.8 L128.2 408.0 L127.5 410.2 L126.8 412.4 L126.2 414.6 L125.6 416.8 L125.1 419.0 L124.6 421.3 L124.2 423.5 L123.8 425.8 L123.5 428.1 L123.2 430.3 L122.9 432.6 L122.7 434.9 L122.6 437.1 L122.4 439.4 L122.4 441.7 L122.3 444.0 L122.4 446.3 L122.4 448.6 L122.6 450.8 L122.7 453.1 L122.9 455.4 L123.2 457.7 L123.5 459.9 L123.8 462.2 L124.2 464.5 L124.7 466.7 L125.2 469.0 L125.7 471.2 L126.3 473.4 L126.9 475.7 L127.6 477.9 L128.3 480.1 L129.1 482.3 L129.9 484.5 L130.7 486.6 L131.6 488.8 L132.6 490.9 L133.6 493.1 L134.6 495.2 L135.7 497.3 L136.8 499.3 L138.0 501.4 L139.2 503.4 L140.4 505.5 L141.7 507.5 L143.1 509.4 L144.4 511.4 L145.9 513.3 L147.3 515.3 L148.8 517.2 L150.4 519.0 L152.0 520.9 L153.6 522.7 L155.3 524.5 L157.0 526.3 L158.7 528.0 L160.5 529.7 L162.3 531.4 L164.2 533.0 L166.0 534.7 L168.0 536.3 L169.9 537.8 L171.9 539.4 L173.9 540.9 L176.0 542.4 L178.1 543.8 L180.2 545.2 L182.4 546.6 L184.6 547.9 L186.8 549.2 L189.0 550.5 L191.3 551.7 L193.6 552.9 L195.9 554.1 L198.3 555.2 L200.6 556.3 L203.0 557.3 L205.4 558.3 L207.9 559.3 L210.4 560.2 L212.8 561.1 L215.4 562.0 L217.9 562.8 L220.4 563.5 L223.0 564.3 L225.6 565.0 L228.2 565.6 L230.8 566.2 L233.4 566.8 L236.0 567.3 L238.7 567.8 L241.3 568.2 L244.0 568.6 L246.7 569.0 L249.4 569.3 L252.1 569.5 L254.8 569.8 L257.5 569.9 L260.2 570.1 L262.9 570.2 L265.6 570.2 L268.3 570.2 L271.1 570.2 L273.8 570.1 L276.5 570.0 L279.2 569.8 L281.9 569.6 L284.7 569.4 L287.4 569.1 L290.1 568.8 L292.8 568.4 L295.5 568.0 L298.1 567.5 L300.8 567.0 L303.5 566.5 L306.1 565.9 L308.8 565.2 L311.4 564.6 L314.0 563.9 L316.6 563.1 L319.2 562.3 L321.7 561.5 L324.3 560.6 L326.8 559.7 L329.3 558.7 L331.8 557.8 L334.3 556.7 L336.7 555.7 L339.2 554.6 L341.6 553.4 L344.0 552.2 L346.3 551.0 L348.6 549.8 L351.0 548.5 L353.2 547.2 L355.5 545.8 L357.7 544.4 L359.9 543.0 L362.1 541.5 L364.2 540.1 L366.3 538.5 L368.4 537.0 L370.4 535.4 L372.4 533.8 L374.4 532.1 L376.3 530.5 L378.2 528.8 L380.1 527.1 L381.9 525.3 L383.7 523.5 L385.4 521.7 L387.2 519.9 L388.8 518.0 L390.5 516.1 L392.1 514.2 L393.6 512.3 L395.2 510.4 L396.7 508.4 L398.1 506.4 L399.5 504.4 L400.8 502.4 L402.2 500.3 L403.4 498.3 L404.7 496.2 L405.9 494.1 L407.0 492.0 L408.1 489.8 L409.2 487.7 L410.2 485.5 L411.1 483.4 L412.1 481.2 L412.9 479.0 L413.8 476.8 L414.6 474.6 L414.6 474.6 L415.5 471.9 L416.4 469.3 L417.3 466.7 L418.2 464.1 L419.0 461.5 L419.9 458.9 L420.8 456.4 L421.7 453.8 L422.6 451.2 L423.5 448.6 L424.4 446.0 L425.3 443.5 L426.2 440.9 L427.0 438.4 L427.9 435.8 L428.8 433.2 L429.7 430.7 L430.6 428.1 L431.4 425.6 L432.3 423.1 L433.2 420.5 L434.1 418.0 L434.9 415.5 L435.8 413.0 L436.7 410.4 L437.5 407.9 L438.4 405.4 L439.3 402.9 L440.1 400.4 L441.0 397.9 L441.8 395.4 L442.7 392.9 L443.6 390.4 L444.4 387.9 L445.3 385.5 L446.1 383.0 L447.0 380.5 L447.8 378.0 L448.7 375.6 L449.5 373.1 L450.4 370.7 L451.2 368.2 L452.1 365.7 L452.9 363.3 L453.8 360.9 L454.6 358.4 L455.4 356.0 L456.3 353.5 L457.1 351.1 L457.9 348.7 L458.8 346.3 L459.6 343.8 L460.5 341.4 L461.3 339.0 L462.1 336.6 L462.9 334.2 L463.8 331.8 L464.6 329.4 L465.4 327.0 L466.2 324.6 L467.1 322.2 L467.9 319.9 L468.7 317.5 L469.5 315.1 L470.3 312.7 L471.2 310.4 L472.0 308.0 L472.8 305.6 L473.6 303.3 L474.4 300.9 L475.2 298.6 L476.0 296.2 L476.8 293.9 L477.7 291.5 L478.5 289.2 L479.3 286.9 L480.1 284.5 L480.9 282.2 L481.7 279.9 L482.5 277.5 L483.3 275.2 L484.1 272.9 L484.9 270.6 L485.7 268.3 L486.5 266.0 L487.3 263.7 L488.0 261.4 L488.8 259.1 L489.6 256.8 Z" fill="#52964c"/>
  <g clip-path="url(#cFloorVis)">
    <path d="M489.6 256.8 L490.3 254.9 L490.9 252.9 L491.4 250.9 L492.0 249.0 L492.4 247.0 L492.9 245.0 L493.3 243.0 L493.6 241.0 L493.9 239.0 L494.2 237.0 L494.4 235.0 L494.6 233.0 L494.7 231.0 L494.8 229.0 L494.8 227.0 L494.8 225.0 L494.8 223.1 L494.7 221.1 L494.6 219.1 L494.4 217.1 L494.2 215.1 L494.0 213.1 L493.7 211.1 L493.3 209.2 L493.0 207.2 L492.5 205.3 L492.1 203.3 L491.6 201.4 L491.0 199.4 L490.4 197.5 L489.8 195.6 L489.1 193.7 L488.4 191.8 L487.7 189.9 L486.9 188.1 L486.1 186.2 L485.2 184.4 L484.3 182.6 L483.4 180.7 L482.4 179.0 L481.4 177.2 L480.3 175.4 L479.2 173.7 L478.1 171.9 L477.0 170.2 L475.8 168.5 L474.5 166.8 L473.3 165.2 L472.0 163.5 L470.6 161.9 L469.3 160.3 L467.8 158.7 L466.4 157.1 L464.9 155.6 L463.5 154.1 L461.9 152.6 L460.4 151.1 L458.8 149.7 L457.2 148.2 L455.5 146.8 L453.8 145.4 L452.1 144.1 L450.4 142.7 L448.6 141.4 L446.8 140.2 L445.0 138.9 L443.2 137.7 L441.3 136.5 L439.4 135.3 L437.5 134.1 L435.6 133.0 L433.6 131.9 L431.7 130.8 L429.7 129.8 L427.6 128.8 L425.6 127.8 L423.5 126.9 L421.5 125.9 L419.4 125.0 L417.2 124.2 L415.1 123.3 L413.0 122.5 L410.8 121.7 L408.6 121.0 L406.4 120.3 L404.2 119.6 L402.0 118.9 L399.7 118.3 L397.5 117.7 L395.2 117.2 L392.9 116.6 L390.7 116.1 L388.4 115.7 L386.1 115.2 L383.7 114.8 L381.4 114.5 L379.1 114.1 L376.8 113.8 L374.4 113.5 L372.1 113.3 L369.7 113.1 L367.4 112.9 L365.0 112.8 L362.7 112.6 L360.3 112.6 L357.9 112.5 L355.6 112.5 L353.2 112.5 L350.8 112.6 L348.5 112.7 L346.1 112.8 L343.7 112.9 L341.4 113.1 L339.0 113.3 L336.7 113.6 L334.3 113.9 L332.0 114.2 L329.7 114.5 L327.4 114.9 L325.0 115.3 L322.7 115.7 L320.4 116.2 L318.1 116.7 L315.9 117.2 L313.6 117.8 L311.3 118.4 L309.1 119.0 L306.9 119.7 L304.6 120.4 L302.4 121.1 L300.2 121.9 L298.1 122.7 L295.9 123.5 L293.8 124.3 L291.6 125.2 L289.5 126.1 L287.4 127.0 L285.4 128.0 L283.3 129.0 L281.3 130.0 L279.3 131.0 L277.3 132.1 L275.3 133.2 L273.4 134.4 L271.5 135.5 L269.6 136.7 L267.7 137.9 L265.8 139.1 L264.0 140.4 L262.2 141.7 L260.5 143.0 L258.7 144.4 L257.0 145.7 L255.3 147.1 L253.6 148.5 L252.0 150.0 L250.4 151.4 L248.8 152.9 L247.3 154.4 L245.8 155.9 L244.3 157.5 L242.9 159.0 L241.5 160.6 L240.1 162.3 L238.7 163.9 L237.4 165.5 L236.1 167.2 L234.9 168.9 L233.7 170.6 L232.5 172.3 L231.4 174.1 L230.3 175.8 L229.2 177.6 L228.2 179.4 L227.2 181.2 L226.2 183.0 L225.3 184.8 L224.5 186.7 L223.6 188.5 L223.6 188.5 L222.7 190.7 L221.7 192.9 L220.7 195.1 L219.8 197.4 L218.8 199.6 L217.8 201.8 L216.9 204.0 L215.9 206.2 L214.9 208.4 L213.9 210.7 L213.0 212.9 L212.0 215.1 L211.0 217.4 L210.0 219.6 L209.0 221.8 L208.1 224.1 L207.1 226.3 L206.1 228.6 L205.1 230.9 L204.1 233.1 L203.1 235.4 L202.1 237.6 L201.1 239.9 L200.1 242.2 L199.1 244.5 L198.1 246.7 L197.1 249.0 L196.1 251.3 L195.1 253.6 L194.1 255.9 L193.1 258.2 L192.1 260.5 L191.1 262.8 L190.1 265.1 L189.1 267.4 L188.1 269.7 L187.1 272.0 L186.1 274.3 L185.0 276.7 L184.0 279.0 L183.0 281.3 L182.0 283.6 L181.0 286.0 L179.9 288.3 L178.9 290.7 L177.9 293.0 L176.9 295.3 L175.8 297.7 L174.8 300.1 L173.8 302.4 L172.7 304.8 L171.7 307.1 L170.7 309.5 L169.6 311.9 L168.6 314.3 L167.5 316.6 L166.5 319.0 L165.5 321.4 L164.4 323.8 L163.4 326.2 L162.3 328.6 L161.3 331.0 L160.2 333.4 L159.2 335.8 L158.1 338.2 L157.0 340.6 L156.0 343.1 L154.9 345.5 L153.9 347.9 L152.8 350.3 L151.7 352.8 L150.7 355.2 L149.6 357.6 L148.5 360.1 L147.5 362.5 L146.4 365.0 L145.3 367.4 L144.2 369.9 L143.2 372.4 L142.1 374.8 L141.0 377.3 L139.9 379.8 L138.8 382.3 L137.7 384.7 L136.7 387.2 L135.6 389.7 L134.5 392.2 L133.4 394.7 L132.3 397.2 L132.3 397.2 L131.4 399.3 L130.5 401.5 L129.7 403.6 L128.9 405.8 L128.2 408.0 L127.5 410.2 L126.8 412.4 L126.2 414.6 L125.6 416.8 L125.1 419.0 L124.6 421.3 L124.2 423.5 L123.8 425.8 L123.5 428.1 L123.2 430.3 L122.9 432.6 L122.7 434.9 L122.6 437.1 L122.4 439.4 L122.4 441.7 L122.3 444.0 L122.4 446.3 L122.4 448.6 L122.6 450.8 L122.7 453.1 L122.9 455.4 L123.2 457.7 L123.5 459.9 L123.8 462.2 L124.2 464.5 L124.7 466.7 L125.2 469.0 L125.7 471.2 L126.3 473.4 L126.9 475.7 L127.6 477.9 L128.3 480.1 L129.1 482.3 L129.9 484.5 L130.7 486.6 L131.6 488.8 L132.6 490.9 L133.6 493.1 L134.6 495.2 L135.7 497.3 L136.8 499.3 L138.0 501.4 L139.2 503.4 L140.4 505.5 L141.7 507.5 L143.1 509.4 L144.4 511.4 L145.9 513.3 L147.3 515.3 L148.8 517.2 L150.4 519.0 L152.0 520.9 L153.6 522.7 L155.3 524.5 L157.0 526.3 L158.7 528.0 L160.5 529.7 L162.3 531.4 L164.2 533.0 L166.0 534.7 L168.0 536.3 L169.9 537.8 L171.9 539.4 L173.9 540.9 L176.0 542.4 L178.1 543.8 L180.2 545.2 L182.4 546.6 L184.6 547.9 L186.8 549.2 L189.0 550.5 L191.3 551.7 L193.6 552.9 L195.9 554.1 L198.3 555.2 L200.6 556.3 L203.0 557.3 L205.4 558.3 L207.9 559.3 L210.4 560.2 L212.8 561.1 L215.4 562.0 L217.9 562.8 L220.4 563.5 L223.0 564.3 L225.6 565.0 L228.2 565.6 L230.8 566.2 L233.4 566.8 L236.0 567.3 L238.7 567.8 L241.3 568.2 L244.0 568.6 L246.7 569.0 L249.4 569.3 L252.1 569.5 L254.8 569.8 L257.5 569.9 L260.2 570.1 L262.9 570.2 L265.6 570.2 L268.3 570.2 L271.1 570.2 L273.8 570.1 L276.5 570.0 L279.2 569.8 L281.9 569.6 L284.7 569.4 L287.4 569.1 L290.1 568.8 L292.8 568.4 L295.5 568.0 L298.1 567.5 L300.8 567.0 L303.5 566.5 L306.1 565.9 L308.8 565.2 L311.4 564.6 L314.0 563.9 L316.6 563.1 L319.2 562.3 L321.7 561.5 L324.3 560.6 L326.8 559.7 L329.3 558.7 L331.8 557.8 L334.3 556.7 L336.7 555.7 L339.2 554.6 L341.6 553.4 L344.0 552.2 L346.3 551.0 L348.6 549.8 L351.0 548.5 L353.2 547.2 L355.5 545.8 L357.7 544.4 L359.9 543.0 L362.1 541.5 L364.2 540.1 L366.3 538.5 L368.4 537.0 L370.4 535.4 L372.4 533.8 L374.4 532.1 L376.3 530.5 L378.2 528.8 L380.1 527.1 L381.9 525.3 L383.7 523.5 L385.4 521.7 L387.2 519.9 L388.8 518.0 L390.5 516.1 L392.1 514.2 L393.6 512.3 L395.2 510.4 L396.7 508.4 L398.1 506.4 L399.5 504.4 L400.8 502.4 L402.2 500.3 L403.4 498.3 L404.7 496.2 L405.9 494.1 L407.0 492.0 L408.1 489.8 L409.2 487.7 L410.2 485.5 L411.1 483.4 L412.1 481.2 L412.9 479.0 L413.8 476.8 L414.6 474.6 L414.6 474.6 L415.5 471.9 L416.4 469.3 L417.3 466.7 L418.2 464.1 L419.0 461.5 L419.9 458.9 L420.8 456.4 L421.7 453.8 L422.6 451.2 L423.5 448.6 L424.4 446.0 L425.3 443.5 L426.2 440.9 L427.0 438.4 L427.9 435.8 L428.8 433.2 L429.7 430.7 L430.6 428.1 L431.4 425.6 L432.3 423.1 L433.2 420.5 L434.1 418.0 L434.9 415.5 L435.8 413.0 L436.7 410.4 L437.5 407.9 L438.4 405.4 L439.3 402.9 L440.1 400.4 L441.0 397.9 L441.8 395.4 L442.7 392.9 L443.6 390.4 L444.4 387.9 L445.3 385.5 L446.1 383.0 L447.0 380.5 L447.8 378.0 L448.7 375.6 L449.5 373.1 L450.4 370.7 L451.2 368.2 L452.1 365.7 L452.9 363.3 L453.8 360.9 L454.6 358.4 L455.4 356.0 L456.3 353.5 L457.1 351.1 L457.9 348.7 L458.8 346.3 L459.6 343.8 L460.5 341.4 L461.3 339.0 L462.1 336.6 L462.9 334.2 L463.8 331.8 L464.6 329.4 L465.4 327.0 L466.2 324.6 L467.1 322.2 L467.9 319.9 L468.7 317.5 L469.5 315.1 L470.3 312.7 L471.2 310.4 L472.0 308.0 L472.8 305.6 L473.6 303.3 L474.4 300.9 L475.2 298.6 L476.0 296.2 L476.8 293.9 L477.7 291.5 L478.5 289.2 L479.3 286.9 L480.1 284.5 L480.9 282.2 L481.7 279.9 L482.5 277.5 L483.3 275.2 L484.1 272.9 L484.9 270.6 L485.7 268.3 L486.5 266.0 L487.3 263.7 L488.0 261.4 L488.8 259.1 L489.6 256.8 Z" fill="none" stroke="url(#gAO)" stroke-width="36" filter="url(#blur8)"/>
    <path d="M491.9 231.4 L492.5 229.4 L493.2 227.5 L493.7 225.5 L494.3 223.5 L494.7 221.5 L495.2 219.5 L495.6 217.5 L495.9 215.4 L496.2 213.4 L496.5 211.4 L496.7 209.4 L496.9 207.4 L497.0 205.3 L497.1 203.3 L497.2 201.3 L497.2 199.3 L497.1 197.3 L497.0 195.2 L496.9 193.2 L496.7 191.2 L496.5 189.2 L496.3 187.2 L496.0 185.2 L495.6 183.2 L495.2 181.2 L494.8 179.3 L494.3 177.3 L493.8 175.3 L493.3 173.4 L492.7 171.4 L492.0 169.5 L491.3 167.6 L490.6 165.7 L489.8 163.8 L489.0 161.9 L488.2 160.0 L487.3 158.1 L486.4 156.3 L485.4 154.5 L484.4 152.6 L483.4 150.8 L482.3 149.1 L481.2 147.3 L480.1 145.5 L478.9 143.8 L477.7 142.1 L476.4 140.4 L475.1 138.7 L473.8 137.0 L472.4 135.4 L471.0 133.8 L469.6 132.2 L468.1 130.6 L466.6 129.0 L465.1 127.5 L463.6 126.0 L462.0 124.5 L460.3 123.0 L458.7 121.6 L457.0 120.2 L455.3 118.8 L453.6 117.4 L451.8 116.0 L450.0 114.7 L448.2 113.4 L446.3 112.2 L444.5 110.9 L442.6 109.7 L440.6 108.5 L438.7 107.3 L436.7 106.2 L434.7 105.1 L432.7 104.0 L430.7 103.0 L428.6 101.9 L426.5 100.9 L424.4 100.0 L422.3 99.0 L420.1 98.1 L418.0 97.3 L415.8 96.4 L413.6 95.6 L411.4 94.8 L409.2 94.0 L406.9 93.3 L404.7 92.6 L402.4 92.0 L400.1 91.3 L397.8 90.7 L395.5 90.2 L393.2 89.6 L390.9 89.1 L388.5 88.7 L386.2 88.2 L383.8 87.8 L381.5 87.4 L379.1 87.1 L376.7 86.8 L374.3 86.5 L371.9 86.3 L369.6 86.0 L367.2 85.9 L364.7 85.7 L362.3 85.6 L359.9 85.5 L357.5 85.5 L355.1 85.5 L352.7 85.5 L350.3 85.5 L347.9 85.6 L345.5 85.7 L343.1 85.9 L340.7 86.1 L338.3 86.3 L335.9 86.5 L333.5 86.8 L331.1 87.1 L328.7 87.5 L326.4 87.9 L324.0 88.3 L321.6 88.7 L319.3 89.2 L317.0 89.7 L314.6 90.2 L312.3 90.8 L310.0 91.4 L307.7 92.1 L305.5 92.7 L303.2 93.4 L301.0 94.2 L298.7 94.9 L296.5 95.7 L294.3 96.5 L292.1 97.4 L289.9 98.3 L287.8 99.2 L285.7 100.1 L283.6 101.1 L281.5 102.1 L279.4 103.1 L277.3 104.2 L275.3 105.3 L273.3 106.4 L271.3 107.5 L269.4 108.7 L267.4 109.9 L265.5 111.1 L263.6 112.4 L261.8 113.6 L259.9 114.9 L258.1 116.3 L256.4 117.6 L254.6 119.0 L252.9 120.4 L251.2 121.8 L249.5 123.3 L247.9 124.8 L246.3 126.3 L244.7 127.8 L243.2 129.3 L241.7 130.9 L240.2 132.5 L238.8 134.1 L237.3 135.7 L236.0 137.4 L234.6 139.0 L233.3 140.7 L232.1 142.4 L230.8 144.2 L229.6 145.9 L228.5 147.7 L227.3 149.4 L226.3 151.2 L225.2 153.0 L224.2 154.9 L223.2 156.7 L222.3 158.5 L221.4 160.4 L220.5 162.3 L220.5 162.3 L219.6 164.5 L218.6 166.7 L217.6 169.0 L216.6 171.2 L215.6 173.4 L214.6 175.7 L213.6 177.9 L212.6 180.2 L211.6 182.4 L210.6 184.7 L209.6 186.9 L208.6 189.2 L207.6 191.5 L206.6 193.7 L205.6 196.0 L204.6 198.3 L203.6 200.5 L202.6 202.8 L201.6 205.1 L200.6 207.4 L199.6 209.7 L198.6 212.0 L197.5 214.3 L196.5 216.6 L195.5 218.9 L194.5 221.2 L193.5 223.5 L192.4 225.8 L191.4 228.1 L190.4 230.4 L189.4 232.7 L188.3 235.1 L187.3 237.4 L186.3 239.7 L185.2 242.1 L184.2 244.4 L183.2 246.8 L182.1 249.1 L181.1 251.5 L180.1 253.8 L179.0 256.2 L178.0 258.5 L176.9 260.9 L175.9 263.3 L174.8 265.6 L173.8 268.0 L172.7 270.4 L171.7 272.8 L170.6 275.2 L169.6 277.5 L168.5 279.9 L167.4 282.3 L166.4 284.7 L165.3 287.1 L164.2 289.5 L163.2 292.0 L162.1 294.4 L161.0 296.8 L160.0 299.2 L158.9 301.6 L157.8 304.1 L156.7 306.5 L155.7 308.9 L154.6 311.4 L153.5 313.8 L152.4 316.3 L151.3 318.7 L150.3 321.2 L149.2 323.6 L148.1 326.1 L147.0 328.6 L145.9 331.0 L144.8 333.5 L143.7 336.0 L142.6 338.5 L141.5 340.9 L140.4 343.4 L139.3 345.9 L138.2 348.4 L137.1 350.9 L136.0 353.4 L134.9 355.9 L133.8 358.4 L132.6 360.9 L131.5 363.5 L130.4 366.0 L129.3 368.5 L128.2 371.0 L127.1 373.6 L127.1 373.6 L126.1 375.7 L125.2 377.9 L124.4 380.1 L123.6 382.3 L122.8 384.5 L122.1 386.7 L121.4 389.0 L120.8 391.2 L120.2 393.5 L119.7 395.7 L119.2 398.0 L118.8 400.3 L118.4 402.6 L118.0 404.9 L117.7 407.2 L117.4 409.5 L117.2 411.8 L117.1 414.1 L116.9 416.4 L116.9 418.7 L116.8 421.0 L116.8 423.4 L116.9 425.7 L117.0 428.0 L117.2 430.3 L117.4 432.6 L117.7 434.9 L118.0 437.2 L118.3 439.5 L118.7 441.8 L119.2 444.1 L119.7 446.4 L120.2 448.7 L120.8 450.9 L121.4 453.2 L122.1 455.4 L122.8 457.7 L123.6 459.9 L124.4 462.1 L125.3 464.3 L126.2 466.5 L127.2 468.7 L128.2 470.8 L129.3 473.0 L130.4 475.1 L131.5 477.2 L132.7 479.3 L133.9 481.4 L135.2 483.4 L136.5 485.5 L137.9 487.5 L139.3 489.5 L140.8 491.5 L142.3 493.4 L143.8 495.3 L145.4 497.2 L147.0 499.1 L148.6 500.9 L150.3 502.8 L152.1 504.6 L153.9 506.3 L155.7 508.1 L157.5 509.8 L159.4 511.5 L161.3 513.1 L163.3 514.7 L165.3 516.3 L167.3 517.9 L169.4 519.4 L171.5 520.9 L173.7 522.4 L175.8 523.8 L178.0 525.2 L180.3 526.6 L182.5 527.9 L184.8 529.2 L187.1 530.4 L189.5 531.6 L191.8 532.8 L194.2 534.0 L196.7 535.1 L199.1 536.1 L201.6 537.1 L204.1 538.1 L206.6 539.1 L209.1 540.0 L211.7 540.8 L214.3 541.7 L216.9 542.4 L219.5 543.2 L222.1 543.9 L224.8 544.5 L227.5 545.2 L230.1 545.7 L232.8 546.3 L235.5 546.8 L238.3 547.2 L241.0 547.6 L243.7 548.0 L246.5 548.3 L249.2 548.6 L252.0 548.8 L254.8 549.0 L257.5 549.1 L260.3 549.2 L263.1 549.3 L265.9 549.3 L268.7 549.2 L271.4 549.2 L274.2 549.0 L277.0 548.9 L279.8 548.7 L282.6 548.4 L285.3 548.1 L288.1 547.8 L290.8 547.4 L293.6 547.0 L296.3 546.5 L299.1 546.0 L301.8 545.4 L304.5 544.8 L307.2 544.2 L309.9 543.5 L312.6 542.8 L315.2 542.0 L317.9 541.2 L320.5 540.4 L323.1 539.5 L325.7 538.6 L328.2 537.6 L330.8 536.6 L333.3 535.5 L335.8 534.5 L338.3 533.3 L340.8 532.2 L343.2 531.0 L345.6 529.7 L348.0 528.5 L350.3 527.2 L352.7 525.8 L355.0 524.5 L357.2 523.0 L359.5 521.6 L361.7 520.1 L363.9 518.6 L366.0 517.1 L368.1 515.5 L370.2 513.9 L372.3 512.2 L374.3 510.6 L376.2 508.9 L378.2 507.2 L380.1 505.4 L382.0 503.6 L383.8 501.8 L385.6 500.0 L387.3 498.1 L389.1 496.2 L390.7 494.3 L392.4 492.4 L394.0 490.4 L395.5 488.5 L397.0 486.5 L398.5 484.4 L399.9 482.4 L401.3 480.3 L402.7 478.3 L404.0 476.2 L405.2 474.1 L406.4 471.9 L407.6 469.8 L408.7 467.6 L409.8 465.4 L410.9 463.2 L411.8 461.0 L412.8 458.8 L413.7 456.6 L414.5 454.4 L415.3 452.1 L415.3 452.1 L416.3 449.5 L417.2 446.8 L418.1 444.2 L419.0 441.5 L419.9 438.9 L420.8 436.3 L421.7 433.6 L422.6 431.0 L423.6 428.4 L424.5 425.8 L425.4 423.2 L426.3 420.6 L427.2 418.0 L428.1 415.4 L429.0 412.8 L429.9 410.2 L430.8 407.6 L431.7 405.0 L432.6 402.4 L433.5 399.9 L434.3 397.3 L435.2 394.7 L436.1 392.2 L437.0 389.6 L437.9 387.1 L438.8 384.5 L439.7 382.0 L440.5 379.4 L441.4 376.9 L442.3 374.4 L443.2 371.8 L444.1 369.3 L444.9 366.8 L445.8 364.3 L446.7 361.7 L447.5 359.2 L448.4 356.7 L449.3 354.2 L450.2 351.7 L451.0 349.2 L451.9 346.7 L452.7 344.2 L453.6 341.8 L454.5 339.3 L455.3 336.8 L456.2 334.3 L457.0 331.9 L457.9 329.4 L458.7 326.9 L459.6 324.5 L460.5 322.0 L461.3 319.6 L462.2 317.1 L463.0 314.7 L463.8 312.2 L464.7 309.8 L465.5 307.4 L466.4 304.9 L467.2 302.5 L468.1 300.1 L468.9 297.7 L469.7 295.3 L470.6 292.8 L471.4 290.4 L472.2 288.0 L473.1 285.6 L473.9 283.2 L474.7 280.8 L475.6 278.5 L476.4 276.1 L477.2 273.7 L478.0 271.3 L478.9 268.9 L479.7 266.6 L480.5 264.2 L481.3 261.8 L482.1 259.5 L483.0 257.1 L483.8 254.8 L484.6 252.4 L485.4 250.1 L486.2 247.7 L487.0 245.4 L487.8 243.0 L488.6 240.7 L489.5 238.4 L490.3 236.1 L491.1 233.7 L491.9 231.4 Z" fill="none" stroke="#2a522a" stroke-width="46" filter="url(#blur11)" opacity="0.62"/>
  </g>
  <path d="M489.6 256.8 L490.3 254.9 L490.9 252.9 L491.4 250.9 L492.0 249.0 L492.4 247.0 L492.9 245.0 L493.3 243.0 L493.6 241.0 L493.9 239.0 L494.2 237.0 L494.4 235.0 L494.6 233.0 L494.7 231.0 L494.8 229.0 L494.8 227.0 L494.8 225.0 L494.8 223.1 L494.7 221.1 L494.6 219.1 L494.4 217.1 L494.2 215.1 L494.0 213.1 L493.7 211.1 L493.3 209.2 L493.0 207.2 L492.5 205.3 L492.1 203.3 L491.6 201.4 L491.0 199.4 L490.4 197.5 L489.8 195.6 L489.1 193.7 L488.4 191.8 L487.7 189.9 L486.9 188.1 L486.1 186.2 L485.2 184.4 L484.3 182.6 L483.4 180.7 L482.4 179.0 L481.4 177.2 L480.3 175.4 L479.2 173.7 L478.1 171.9 L477.0 170.2 L475.8 168.5 L474.5 166.8 L473.3 165.2 L472.0 163.5 L470.6 161.9 L469.3 160.3 L467.8 158.7 L466.4 157.1 L464.9 155.6 L463.5 154.1 L461.9 152.6 L460.4 151.1 L458.8 149.7 L457.2 148.2 L455.5 146.8 L453.8 145.4 L452.1 144.1 L450.4 142.7 L448.6 141.4 L446.8 140.2 L445.0 138.9 L443.2 137.7 L441.3 136.5 L439.4 135.3 L437.5 134.1 L435.6 133.0 L433.6 131.9 L431.7 130.8 L429.7 129.8 L427.6 128.8 L425.6 127.8 L423.5 126.9 L421.5 125.9 L419.4 125.0 L417.2 124.2 L415.1 123.3 L413.0 122.5 L410.8 121.7 L408.6 121.0 L406.4 120.3 L404.2 119.6 L402.0 118.9 L399.7 118.3 L397.5 117.7 L395.2 117.2 L392.9 116.6 L390.7 116.1 L388.4 115.7 L386.1 115.2 L383.7 114.8 L381.4 114.5 L379.1 114.1 L376.8 113.8 L374.4 113.5 L372.1 113.3 L369.7 113.1 L367.4 112.9 L365.0 112.8 L362.7 112.6 L360.3 112.6 L357.9 112.5 L355.6 112.5 L353.2 112.5 L350.8 112.6 L348.5 112.7 L346.1 112.8 L343.7 112.9 L341.4 113.1 L339.0 113.3 L336.7 113.6 L334.3 113.9 L332.0 114.2 L329.7 114.5 L327.4 114.9 L325.0 115.3 L322.7 115.7 L320.4 116.2 L318.1 116.7 L315.9 117.2 L313.6 117.8 L311.3 118.4 L309.1 119.0 L306.9 119.7 L304.6 120.4 L302.4 121.1 L300.2 121.9 L298.1 122.7 L295.9 123.5 L293.8 124.3 L291.6 125.2 L289.5 126.1 L287.4 127.0 L285.4 128.0 L283.3 129.0 L281.3 130.0 L279.3 131.0 L277.3 132.1 L275.3 133.2 L273.4 134.4 L271.5 135.5 L269.6 136.7 L267.7 137.9 L265.8 139.1 L264.0 140.4 L262.2 141.7 L260.5 143.0 L258.7 144.4 L257.0 145.7 L255.3 147.1 L253.6 148.5 L252.0 150.0 L250.4 151.4 L248.8 152.9 L247.3 154.4 L245.8 155.9 L244.3 157.5 L242.9 159.0 L241.5 160.6 L240.1 162.3 L238.7 163.9 L237.4 165.5 L236.1 167.2 L234.9 168.9 L233.7 170.6 L232.5 172.3 L231.4 174.1 L230.3 175.8 L229.2 177.6 L228.2 179.4 L227.2 181.2 L226.2 183.0 L225.3 184.8 L224.5 186.7 L223.6 188.5 L223.6 188.5 L222.7 190.7 L221.7 192.9 L220.7 195.1 L219.8 197.4 L218.8 199.6 L217.8 201.8 L216.9 204.0 L215.9 206.2 L214.9 208.4 L213.9 210.7 L213.0 212.9 L212.0 215.1 L211.0 217.4 L210.0 219.6 L209.0 221.8 L208.1 224.1 L207.1 226.3 L206.1 228.6 L205.1 230.9 L204.1 233.1 L203.1 235.4 L202.1 237.6 L201.1 239.9 L200.1 242.2 L199.1 244.5 L198.1 246.7 L197.1 249.0 L196.1 251.3 L195.1 253.6 L194.1 255.9 L193.1 258.2 L192.1 260.5 L191.1 262.8 L190.1 265.1 L189.1 267.4 L188.1 269.7 L187.1 272.0 L186.1 274.3 L185.0 276.7 L184.0 279.0 L183.0 281.3 L182.0 283.6 L181.0 286.0 L179.9 288.3 L178.9 290.7 L177.9 293.0 L176.9 295.3 L175.8 297.7 L174.8 300.1 L173.8 302.4 L172.7 304.8 L171.7 307.1 L170.7 309.5 L169.6 311.9 L168.6 314.3 L167.5 316.6 L166.5 319.0 L165.5 321.4 L164.4 323.8 L163.4 326.2 L162.3 328.6 L161.3 331.0 L160.2 333.4 L159.2 335.8 L158.1 338.2 L157.0 340.6 L156.0 343.1 L154.9 345.5 L153.9 347.9 L152.8 350.3 L151.7 352.8 L150.7 355.2 L149.6 357.6 L148.5 360.1 L147.5 362.5 L146.4 365.0 L145.3 367.4 L144.2 369.9 L143.2 372.4 L142.1 374.8 L141.0 377.3 L139.9 379.8 L138.8 382.3 L137.7 384.7 L136.7 387.2 L135.6 389.7 L134.5 392.2 L133.4 394.7 L132.3 397.2 L132.3 397.2 L131.4 399.3 L130.5 401.5 L129.7 403.6 L128.9 405.8 L128.2 408.0 L127.5 410.2 L126.8 412.4 L126.2 414.6 L125.6 416.8 L125.1 419.0 L124.6 421.3 L124.2 423.5 L123.8 425.8 L123.5 428.1 L123.2 430.3 L122.9 432.6 L122.7 434.9 L122.6 437.1 L122.4 439.4 L122.4 441.7 L122.3 444.0 L122.4 446.3 L122.4 448.6 L122.6 450.8 L122.7 453.1 L122.9 455.4 L123.2 457.7 L123.5 459.9 L123.8 462.2 L124.2 464.5 L124.7 466.7 L125.2 469.0 L125.7 471.2 L126.3 473.4 L126.9 475.7 L127.6 477.9 L128.3 480.1 L129.1 482.3 L129.9 484.5 L130.7 486.6 L131.6 488.8 L132.6 490.9 L133.6 493.1 L134.6 495.2 L135.7 497.3 L136.8 499.3 L138.0 501.4 L139.2 503.4 L140.4 505.5 L141.7 507.5 L143.1 509.4 L144.4 511.4 L145.9 513.3 L147.3 515.3 L148.8 517.2 L150.4 519.0 L152.0 520.9 L153.6 522.7 L155.3 524.5 L157.0 526.3 L158.7 528.0 L160.5 529.7 L162.3 531.4 L164.2 533.0 L166.0 534.7 L168.0 536.3 L169.9 537.8 L171.9 539.4 L173.9 540.9 L176.0 542.4 L178.1 543.8 L180.2 545.2 L182.4 546.6 L184.6 547.9 L186.8 549.2 L189.0 550.5 L191.3 551.7 L193.6 552.9 L195.9 554.1 L198.3 555.2 L200.6 556.3 L203.0 557.3 L205.4 558.3 L207.9 559.3 L210.4 560.2 L212.8 561.1 L215.4 562.0 L217.9 562.8 L220.4 563.5 L223.0 564.3 L225.6 565.0 L228.2 565.6 L230.8 566.2 L233.4 566.8 L236.0 567.3 L238.7 567.8 L241.3 568.2 L244.0 568.6 L246.7 569.0 L249.4 569.3 L252.1 569.5 L254.8 569.8 L257.5 569.9 L260.2 570.1 L262.9 570.2 L265.6 570.2 L268.3 570.2 L271.1 570.2 L273.8 570.1 L276.5 570.0 L279.2 569.8 L281.9 569.6 L284.7 569.4 L287.4 569.1 L290.1 568.8 L292.8 568.4 L295.5 568.0 L298.1 567.5 L300.8 567.0 L303.5 566.5 L306.1 565.9 L308.8 565.2 L311.4 564.6 L314.0 563.9 L316.6 563.1 L319.2 562.3 L321.7 561.5 L324.3 560.6 L326.8 559.7 L329.3 558.7 L331.8 557.8 L334.3 556.7 L336.7 555.7 L339.2 554.6 L341.6 553.4 L344.0 552.2 L346.3 551.0 L348.6 549.8 L351.0 548.5 L353.2 547.2 L355.5 545.8 L357.7 544.4 L359.9 543.0 L362.1 541.5 L364.2 540.1 L366.3 538.5 L368.4 537.0 L370.4 535.4 L372.4 533.8 L374.4 532.1 L376.3 530.5 L378.2 528.8 L380.1 527.1 L381.9 525.3 L383.7 523.5 L385.4 521.7 L387.2 519.9 L388.8 518.0 L390.5 516.1 L392.1 514.2 L393.6 512.3 L395.2 510.4 L396.7 508.4 L398.1 506.4 L399.5 504.4 L400.8 502.4 L402.2 500.3 L403.4 498.3 L404.7 496.2 L405.9 494.1 L407.0 492.0 L408.1 489.8 L409.2 487.7 L410.2 485.5 L411.1 483.4 L412.1 481.2 L412.9 479.0 L413.8 476.8 L414.6 474.6 L414.6 474.6 L415.5 471.9 L416.4 469.3 L417.3 466.7 L418.2 464.1 L419.0 461.5 L419.9 458.9 L420.8 456.4 L421.7 453.8 L422.6 451.2 L423.5 448.6 L424.4 446.0 L425.3 443.5 L426.2 440.9 L427.0 438.4 L427.9 435.8 L428.8 433.2 L429.7 430.7 L430.6 428.1 L431.4 425.6 L432.3 423.1 L433.2 420.5 L434.1 418.0 L434.9 415.5 L435.8 413.0 L436.7 410.4 L437.5 407.9 L438.4 405.4 L439.3 402.9 L440.1 400.4 L441.0 397.9 L441.8 395.4 L442.7 392.9 L443.6 390.4 L444.4 387.9 L445.3 385.5 L446.1 383.0 L447.0 380.5 L447.8 378.0 L448.7 375.6 L449.5 373.1 L450.4 370.7 L451.2 368.2 L452.1 365.7 L452.9 363.3 L453.8 360.9 L454.6 358.4 L455.4 356.0 L456.3 353.5 L457.1 351.1 L457.9 348.7 L458.8 346.3 L459.6 343.8 L460.5 341.4 L461.3 339.0 L462.1 336.6 L462.9 334.2 L463.8 331.8 L464.6 329.4 L465.4 327.0 L466.2 324.6 L467.1 322.2 L467.9 319.9 L468.7 317.5 L469.5 315.1 L470.3 312.7 L471.2 310.4 L472.0 308.0 L472.8 305.6 L473.6 303.3 L474.4 300.9 L475.2 298.6 L476.0 296.2 L476.8 293.9 L477.7 291.5 L478.5 289.2 L479.3 286.9 L480.1 284.5 L480.9 282.2 L481.7 279.9 L482.5 277.5 L483.3 275.2 L484.1 272.9 L484.9 270.6 L485.7 268.3 L486.5 266.0 L487.3 263.7 L488.0 261.4 L488.8 259.1 L489.6 256.8 Z" fill="none" stroke="#111" stroke-width="1.5"/>
  <path d="M220.5 162.3 L223.6 188.5 M127.1 373.6 L132.3 397.2" stroke="#111" stroke-width="1.3"/>
  <!-- hole halos -->
<g filter="url(#blur6)" opacity="0.6">
  <ellipse cx="356" cy="209" rx="44" ry="40" fill="none" stroke="#2c5a2a" stroke-width="22"/>
  <ellipse cx="272" cy="424" rx="47" ry="43" fill="none" stroke="#2c5a2a" stroke-width="22"/>
</g>
<!-- sketch planes -->
<path d="M238.3 200 L320.2 219.8 L306.5 307.4 L197.3 286.5 Z" fill="#b4b43c" opacity="0.13"/>
<path d="M188.2 222.1 L297.4 247.1 L300.8 312 L204.1 283.5 Z" fill="#b4b43c" opacity="0.13"/>
<path d="M316.6 241.6 L352.3 152.4 L349.6 247.1 L318 304.8 Z" fill="#b4b43c" opacity="0.12"/>
<!-- axes -->
<path d="M183.7 291 L306.5 322.2" stroke="#34b83a" stroke-width="1.5" stroke-dasharray="31 5 9 5" stroke-dashoffset="15" opacity="0.9"/>
<path d="M311 242.6 L315.6 318.8" stroke="#4a78a8" stroke-width="1.4" stroke-dasharray="24 9 6 4.5 40" opacity="0.9"/>
<path d="M317.9 317.7 L345.2 249.4" stroke="#a8743c" stroke-width="1.4" stroke-dasharray="20 6 5 6" opacity="0.9"/>
<circle cx="315.2" cy="324.5" r="6" fill="#8fbf85" opacity="0.7"/>
<!-- hole 1 -->
<ellipse cx="355.1" cy="193.1" rx="30.25" ry="23.5" fill="#56a050" stroke="#111" stroke-width="1.6"/>
<path d="M324.9 193 L325.3 223 M385.4 193 L385.8 223" stroke="#9aa898" stroke-width="1"/>
<ellipse cx="355.5" cy="223.1" rx="32" ry="26.6" fill="none" stroke="#b9ceb2" stroke-width="3"/>
<ellipse cx="355.5" cy="223.1" rx="30.25" ry="24.9" fill="url(#gDisc)" stroke="#2a6ee0" stroke-width="1.8"/>
<clipPath id="cD1"><ellipse cx="355.5" cy="223.1" rx="29.5" ry="24.2"/></clipPath><ellipse cx="355.1" cy="193.1" rx="30.25" ry="23.5" fill="none" stroke="#0a3f88" stroke-width="1.3" clip-path="url(#cD1)"/>
<circle cx="355.3" cy="221.9" r="5" fill="#0a3f99"/>
<!-- hole 2 -->
<ellipse cx="270.5" cy="410" rx="32.8" ry="28" fill="#56a050" stroke="#111" stroke-width="1.6"/>
<path d="M237.7 410 L240 435.6 M303.3 410 L304.7 435.6" stroke="#9aa898" stroke-width="1"/>
<ellipse cx="272.4" cy="435.6" rx="34" ry="28.8" fill="none" stroke="#b9ceb2" stroke-width="3"/>
<ellipse cx="272.4" cy="435.6" rx="32.3" ry="27.1" fill="url(#gDisc)" stroke="#2a6ee0" stroke-width="1.8"/>
<clipPath id="cD2"><ellipse cx="272.4" cy="435.6" rx="31.5" ry="26.4"/></clipPath><ellipse cx="270.5" cy="410" rx="32.8" ry="28" fill="none" stroke="#0a3f88" stroke-width="1.3" clip-path="url(#cD2)"/>
<circle cx="272.4" cy="435.9" r="4.8" fill="#0a3f99"/>

<path d="M463.6 201.4 Q440 250 423.4 299.6" fill="none" stroke="#2e5e2c" stroke-width="0.8" opacity="0.45"/>
<ellipse cx="437.7" cy="253.2" rx="1.8" ry="7.5" transform="rotate(22 437.7 253.2)" fill="none" stroke="#7aa870" stroke-width="0.8" opacity="0.6"/>

</g>
<path d="M491.9 231.4 L492.5 229.4 L493.2 227.5 L493.7 225.5 L494.3 223.5 L494.7 221.5 L495.2 219.5 L495.6 217.5 L495.9 215.4 L496.2 213.4 L496.5 211.4 L496.7 209.4 L496.9 207.4 L497.0 205.3 L497.1 203.3 L497.2 201.3 L497.2 199.3 L497.1 197.3 L497.0 195.2 L496.9 193.2 L496.7 191.2 L496.5 189.2 L496.3 187.2 L496.0 185.2 L495.6 183.2 L495.2 181.2 L494.8 179.3 L494.3 177.3 L493.8 175.3 L493.3 173.4 L492.7 171.4 L492.0 169.5 L491.3 167.6 L490.6 165.7 L489.8 163.8 L489.0 161.9 L488.2 160.0 L487.3 158.1 L486.4 156.3 L485.4 154.5 L484.4 152.6 L483.4 150.8 L482.3 149.1 L481.2 147.3 L480.1 145.5 L478.9 143.8 L477.7 142.1 L476.4 140.4 L475.1 138.7 L473.8 137.0 L472.4 135.4 L471.0 133.8 L469.6 132.2 L468.1 130.6 L466.6 129.0 L465.1 127.5 L463.6 126.0 L462.0 124.5 L460.3 123.0 L458.7 121.6 L457.0 120.2 L455.3 118.8 L453.6 117.4 L451.8 116.0 L450.0 114.7 L448.2 113.4 L446.3 112.2 L444.5 110.9 L442.6 109.7 L440.6 108.5 L438.7 107.3 L436.7 106.2 L434.7 105.1 L432.7 104.0 L430.7 103.0 L428.6 101.9 L426.5 100.9 L424.4 100.0 L422.3 99.0 L420.1 98.1 L418.0 97.3 L415.8 96.4 L413.6 95.6 L411.4 94.8 L409.2 94.0 L406.9 93.3 L404.7 92.6 L402.4 92.0 L400.1 91.3 L397.8 90.7 L395.5 90.2 L393.2 89.6 L390.9 89.1 L388.5 88.7 L386.2 88.2 L383.8 87.8 L381.5 87.4 L379.1 87.1 L376.7 86.8 L374.3 86.5 L371.9 86.3 L369.6 86.0 L367.2 85.9 L364.7 85.7 L362.3 85.6 L359.9 85.5 L357.5 85.5 L355.1 85.5 L352.7 85.5 L350.3 85.5 L347.9 85.6 L345.5 85.7 L343.1 85.9 L340.7 86.1 L338.3 86.3 L335.9 86.5 L333.5 86.8 L331.1 87.1 L328.7 87.5 L326.4 87.9 L324.0 88.3 L321.6 88.7 L319.3 89.2 L317.0 89.7 L314.6 90.2 L312.3 90.8 L310.0 91.4 L307.7 92.1 L305.5 92.7 L303.2 93.4 L301.0 94.2 L298.7 94.9 L296.5 95.7 L294.3 96.5 L292.1 97.4 L289.9 98.3 L287.8 99.2 L285.7 100.1 L283.6 101.1 L281.5 102.1 L279.4 103.1 L277.3 104.2 L275.3 105.3 L273.3 106.4 L271.3 107.5 L269.4 108.7 L267.4 109.9 L265.5 111.1 L263.6 112.4 L261.8 113.6 L259.9 114.9 L258.1 116.3 L256.4 117.6 L254.6 119.0 L252.9 120.4 L251.2 121.8 L249.5 123.3 L247.9 124.8 L246.3 126.3 L244.7 127.8 L243.2 129.3 L241.7 130.9 L240.2 132.5 L238.8 134.1 L237.3 135.7 L236.0 137.4 L234.6 139.0 L233.3 140.7 L232.1 142.4 L230.8 144.2 L229.6 145.9 L228.5 147.7 L227.3 149.4 L226.3 151.2 L225.2 153.0 L224.2 154.9 L223.2 156.7 L222.3 158.5 L221.4 160.4 L220.5 162.3 L220.5 162.3 L219.6 164.5 L218.6 166.7 L217.6 169.0 L216.6 171.2 L215.6 173.4 L214.6 175.7 L213.6 177.9 L212.6 180.2 L211.6 182.4 L210.6 184.7 L209.6 186.9 L208.6 189.2 L207.6 191.5 L206.6 193.7 L205.6 196.0 L204.6 198.3 L203.6 200.5 L202.6 202.8 L201.6 205.1 L200.6 207.4 L199.6 209.7 L198.6 212.0 L197.5 214.3 L196.5 216.6 L195.5 218.9 L194.5 221.2 L193.5 223.5 L192.4 225.8 L191.4 228.1 L190.4 230.4 L189.4 232.7 L188.3 235.1 L187.3 237.4 L186.3 239.7 L185.2 242.1 L184.2 244.4 L183.2 246.8 L182.1 249.1 L181.1 251.5 L180.1 253.8 L179.0 256.2 L178.0 258.5 L176.9 260.9 L175.9 263.3 L174.8 265.6 L173.8 268.0 L172.7 270.4 L171.7 272.8 L170.6 275.2 L169.6 277.5 L168.5 279.9 L167.4 282.3 L166.4 284.7 L165.3 287.1 L164.2 289.5 L163.2 292.0 L162.1 294.4 L161.0 296.8 L160.0 299.2 L158.9 301.6 L157.8 304.1 L156.7 306.5 L155.7 308.9 L154.6 311.4 L153.5 313.8 L152.4 316.3 L151.3 318.7 L150.3 321.2 L149.2 323.6 L148.1 326.1 L147.0 328.6 L145.9 331.0 L144.8 333.5 L143.7 336.0 L142.6 338.5 L141.5 340.9 L140.4 343.4 L139.3 345.9 L138.2 348.4 L137.1 350.9 L136.0 353.4 L134.9 355.9 L133.8 358.4 L132.6 360.9 L131.5 363.5 L130.4 366.0 L129.3 368.5 L128.2 371.0 L127.1 373.6 L127.1 373.6 L126.1 375.7 L125.2 377.9 L124.4 380.1 L123.6 382.3 L122.8 384.5 L122.1 386.7 L121.4 389.0 L120.8 391.2 L120.2 393.5 L119.7 395.7 L119.2 398.0 L118.8 400.3 L118.4 402.6 L118.0 404.9 L117.7 407.2 L117.4 409.5 L117.2 411.8 L117.1 414.1 L116.9 416.4 L116.9 418.7 L116.8 421.0 L116.8 423.4 L116.9 425.7 L117.0 428.0 L117.2 430.3 L117.4 432.6 L117.7 434.9 L118.0 437.2 L118.3 439.5 L118.7 441.8 L119.2 444.1 L119.7 446.4 L120.2 448.7 L120.8 450.9 L121.4 453.2 L122.1 455.4 L122.8 457.7 L123.6 459.9 L124.4 462.1 L125.3 464.3 L126.2 466.5 L127.2 468.7 L128.2 470.8 L129.3 473.0 L130.4 475.1 L131.5 477.2 L132.7 479.3 L133.9 481.4 L135.2 483.4 L136.5 485.5 L137.9 487.5 L139.3 489.5 L140.8 491.5 L142.3 493.4 L143.8 495.3 L145.4 497.2 L147.0 499.1 L148.6 500.9 L150.3 502.8 L152.1 504.6 L153.9 506.3 L155.7 508.1 L157.5 509.8 L159.4 511.5 L161.3 513.1 L163.3 514.7 L165.3 516.3 L167.3 517.9 L169.4 519.4 L171.5 520.9 L173.7 522.4 L175.8 523.8 L178.0 525.2 L180.3 526.6 L182.5 527.9 L184.8 529.2 L187.1 530.4 L189.5 531.6 L191.8 532.8 L194.2 534.0 L196.7 535.1 L199.1 536.1 L201.6 537.1 L204.1 538.1 L206.6 539.1 L209.1 540.0 L211.7 540.8 L214.3 541.7 L216.9 542.4 L219.5 543.2 L222.1 543.9 L224.8 544.5 L227.5 545.2 L230.1 545.7 L232.8 546.3 L235.5 546.8 L238.3 547.2 L241.0 547.6 L243.7 548.0 L246.5 548.3 L249.2 548.6 L252.0 548.8 L254.8 549.0 L257.5 549.1 L260.3 549.2 L263.1 549.3 L265.9 549.3 L268.7 549.2 L271.4 549.2 L274.2 549.0 L277.0 548.9 L279.8 548.7 L282.6 548.4 L285.3 548.1 L288.1 547.8 L290.8 547.4 L293.6 547.0 L296.3 546.5 L299.1 546.0 L301.8 545.4 L304.5 544.8 L307.2 544.2 L309.9 543.5 L312.6 542.8 L315.2 542.0 L317.9 541.2 L320.5 540.4 L323.1 539.5 L325.7 538.6 L328.2 537.6 L330.8 536.6 L333.3 535.5 L335.8 534.5 L338.3 533.3 L340.8 532.2 L343.2 531.0 L345.6 529.7 L348.0 528.5 L350.3 527.2 L352.7 525.8 L355.0 524.5 L357.2 523.0 L359.5 521.6 L361.7 520.1 L363.9 518.6 L366.0 517.1 L368.1 515.5 L370.2 513.9 L372.3 512.2 L374.3 510.6 L376.2 508.9 L378.2 507.2 L380.1 505.4 L382.0 503.6 L383.8 501.8 L385.6 500.0 L387.3 498.1 L389.1 496.2 L390.7 494.3 L392.4 492.4 L394.0 490.4 L395.5 488.5 L397.0 486.5 L398.5 484.4 L399.9 482.4 L401.3 480.3 L402.7 478.3 L404.0 476.2 L405.2 474.1 L406.4 471.9 L407.6 469.8 L408.7 467.6 L409.8 465.4 L410.9 463.2 L411.8 461.0 L412.8 458.8 L413.7 456.6 L414.5 454.4 L415.3 452.1 L415.3 452.1 L416.3 449.5 L417.2 446.8 L418.1 444.2 L419.0 441.5 L419.9 438.9 L420.8 436.3 L421.7 433.6 L422.6 431.0 L423.6 428.4 L424.5 425.8 L425.4 423.2 L426.3 420.6 L427.2 418.0 L428.1 415.4 L429.0 412.8 L429.9 410.2 L430.8 407.6 L431.7 405.0 L432.6 402.4 L433.5 399.9 L434.3 397.3 L435.2 394.7 L436.1 392.2 L437.0 389.6 L437.9 387.1 L438.8 384.5 L439.7 382.0 L440.5 379.4 L441.4 376.9 L442.3 374.4 L443.2 371.8 L444.1 369.3 L444.9 366.8 L445.8 364.3 L446.7 361.7 L447.5 359.2 L448.4 356.7 L449.3 354.2 L450.2 351.7 L451.0 349.2 L451.9 346.7 L452.7 344.2 L453.6 341.8 L454.5 339.3 L455.3 336.8 L456.2 334.3 L457.0 331.9 L457.9 329.4 L458.7 326.9 L459.6 324.5 L460.5 322.0 L461.3 319.6 L462.2 317.1 L463.0 314.7 L463.8 312.2 L464.7 309.8 L465.5 307.4 L466.4 304.9 L467.2 302.5 L468.1 300.1 L468.9 297.7 L469.7 295.3 L470.6 292.8 L471.4 290.4 L472.2 288.0 L473.1 285.6 L473.9 283.2 L474.7 280.8 L475.6 278.5 L476.4 276.1 L477.2 273.7 L478.0 271.3 L478.9 268.9 L479.7 266.6 L480.5 264.2 L481.3 261.8 L482.1 259.5 L483.0 257.1 L483.8 254.8 L484.6 252.4 L485.4 250.1 L486.2 247.7 L487.0 245.4 L487.8 243.0 L488.6 240.7 L489.5 238.4 L490.3 236.1 L491.1 233.7 L491.9 231.4 Z" fill="none" stroke="#c3c9bb" stroke-width="1.6"/>
<!-- manipulator ring -->
<ellipse cx="434.2" cy="357.6" rx="61.8" ry="51.2" fill="none" stroke="#151515" stroke-width="1.8"/>
<!-- upper disc -->
<ellipse cx="434" cy="328.5" rx="31" ry="26.8" fill="#2d7fb5"/>
<path d="M462.3 314.8 A31 26.8 0 1 0 420.9 352.8" fill="none" stroke="#b9c9b9" stroke-width="2"/>
<path d="M419.5 327 A3.5 3.5 0 0 1 426 325 M444 325 A3.5 3.5 0 0 1 451 327" fill="none" stroke="#1a4f90" stroke-width="1"/>
<!-- red disc -->
<ellipse cx="434" cy="355.5" rx="32.5" ry="27.3" fill="none" stroke="#a9c7e6" stroke-width="2"/>
<ellipse cx="434" cy="355.5" rx="31.35" ry="26.15" fill="#1a6fe0" stroke="#ff1e1e" stroke-width="2.3"/>
<path d="M403.5 346 Q420 360 434 356 L450 353 L440 381.5 Q420 384 410 372 Q402 360 403.5 346 Z" fill="#1f5da8" opacity="0.85"/>
<path d="M403.5 346 Q420 360 434 356 L450 353 L440 381.5" fill="none" stroke="#8fb3d8" stroke-width="1"/>
<path d="M435 333 L435 350" stroke="#1a4fa0" stroke-width="1"/>
<ellipse cx="435" cy="355.2" rx="4" ry="3.5" fill="#0a3f99"/>
<!-- arrow -->
<g filter="url(#glow)"><path d="M426 300.8 H445 V304.6 H426 Z" fill="#fff"/></g>
<path d="M426 300.8 H445 V304.6 H426 Z" fill="#fff"/>
<path d="M435 305 L449.5 314 L446 317 L440 313.5 L440 324.5 L430.5 324.5 L430.5 313.5 L424 317 L420.5 314 Z" fill="#fff" stroke="#333" stroke-width="1.3" stroke-linejoin="round"/>

<path d="M491.9 231.4 L492.5 229.4 L493.2 227.5 L493.7 225.5 L494.3 223.5 L494.7 221.5 L495.2 219.5 L495.6 217.5 L495.9 215.4 L496.2 213.4 L496.5 211.4 L496.7 209.4 L496.9 207.4 L497.0 205.3 L497.1 203.3 L497.2 201.3 L497.2 199.3 L497.1 197.3 L497.0 195.2 L496.9 193.2 L496.7 191.2 L496.5 189.2 L496.3 187.2 L496.0 185.2 L495.6 183.2 L495.2 181.2 L494.8 179.3 L494.3 177.3 L493.8 175.3 L493.3 173.4 L492.7 171.4 L492.0 169.5 L491.3 167.6 L490.6 165.7 L489.8 163.8 L489.0 161.9 L488.2 160.0 L487.3 158.1 L486.4 156.3 L485.4 154.5 L484.4 152.6 L483.4 150.8 L482.3 149.1 L481.2 147.3 L480.1 145.5 L478.9 143.8 L477.7 142.1 L476.4 140.4 L475.1 138.7 L473.8 137.0 L472.4 135.4 L471.0 133.8 L469.6 132.2 L468.1 130.6 L466.6 129.0 L465.1 127.5 L463.6 126.0 L462.0 124.5 L460.3 123.0 L458.7 121.6 L457.0 120.2 L455.3 118.8 L453.6 117.4 L451.8 116.0 L450.0 114.7 L448.2 113.4 L446.3 112.2 L444.5 110.9 L442.6 109.7 L440.6 108.5 L438.7 107.3 L436.7 106.2 L434.7 105.1 L432.7 104.0 L430.7 103.0 L428.6 101.9 L426.5 100.9 L424.4 100.0 L422.3 99.0 L420.1 98.1 L418.0 97.3 L415.8 96.4 L413.6 95.6 L411.4 94.8 L409.2 94.0 L406.9 93.3 L404.7 92.6 L402.4 92.0 L400.1 91.3 L397.8 90.7 L395.5 90.2 L393.2 89.6 L390.9 89.1 L388.5 88.7 L386.2 88.2 L383.8 87.8 L381.5 87.4 L379.1 87.1 L376.7 86.8 L374.3 86.5 L371.9 86.3 L369.6 86.0 L367.2 85.9 L364.7 85.7 L362.3 85.6 L359.9 85.5 L357.5 85.5 L355.1 85.5 L352.7 85.5 L350.3 85.5 L347.9 85.6 L345.5 85.7 L343.1 85.9 L340.7 86.1 L338.3 86.3 L335.9 86.5 L333.5 86.8 L331.1 87.1 L328.7 87.5 L326.4 87.9 L324.0 88.3 L321.6 88.7 L319.3 89.2 L317.0 89.7 L314.6 90.2 L312.3 90.8 L310.0 91.4 L307.7 92.1 L305.5 92.7 L303.2 93.4 L301.0 94.2 L298.7 94.9 L296.5 95.7 L294.3 96.5 L292.1 97.4 L289.9 98.3 L287.8 99.2 L285.7 100.1 L283.6 101.1 L281.5 102.1 L279.4 103.1 L277.3 104.2 L275.3 105.3 L273.3 106.4 L271.3 107.5 L269.4 108.7 L267.4 109.9 L265.5 111.1 L263.6 112.4 L261.8 113.6 L259.9 114.9 L258.1 116.3 L256.4 117.6 L254.6 119.0 L252.9 120.4 L251.2 121.8 L249.5 123.3 L247.9 124.8 L246.3 126.3 L244.7 127.8 L243.2 129.3 L241.7 130.9 L240.2 132.5 L238.8 134.1 L237.3 135.7 L236.0 137.4 L234.6 139.0 L233.3 140.7 L232.1 142.4 L230.8 144.2 L229.6 145.9 L228.5 147.7 L227.3 149.4 L226.3 151.2 L225.2 153.0 L224.2 154.9 L223.2 156.7 L222.3 158.5 L221.4 160.4 L220.5 162.3 L220.5 162.3 L219.6 164.5 L218.6 166.7 L217.6 169.0 L216.6 171.2 L215.6 173.4 L214.6 175.7 L213.6 177.9 L212.6 180.2 L211.6 182.4 L210.6 184.7 L209.6 186.9 L208.6 189.2 L207.6 191.5 L206.6 193.7 L205.6 196.0 L204.6 198.3 L203.6 200.5 L202.6 202.8 L201.6 205.1 L200.6 207.4 L199.6 209.7 L198.6 212.0 L197.5 214.3 L196.5 216.6 L195.5 218.9 L194.5 221.2 L193.5 223.5 L192.4 225.8 L191.4 228.1 L190.4 230.4 L189.4 232.7 L188.3 235.1 L187.3 237.4 L186.3 239.7 L185.2 242.1 L184.2 244.4 L183.2 246.8 L182.1 249.1 L181.1 251.5 L180.1 253.8 L179.0 256.2 L178.0 258.5 L176.9 260.9 L175.9 263.3 L174.8 265.6 L173.8 268.0 L172.7 270.4 L171.7 272.8 L170.6 275.2 L169.6 277.5 L168.5 279.9 L167.4 282.3 L166.4 284.7 L165.3 287.1 L164.2 289.5 L163.2 292.0 L162.1 294.4 L161.0 296.8 L160.0 299.2 L158.9 301.6 L157.8 304.1 L156.7 306.5 L155.7 308.9 L154.6 311.4 L153.5 313.8 L152.4 316.3 L151.3 318.7 L150.3 321.2 L149.2 323.6 L148.1 326.1 L147.0 328.6 L145.9 331.0 L144.8 333.5 L143.7 336.0 L142.6 338.5 L141.5 340.9 L140.4 343.4 L139.3 345.9 L138.2 348.4 L137.1 350.9 L136.0 353.4 L134.9 355.9 L133.8 358.4 L132.6 360.9 L131.5 363.5 L130.4 366.0 L129.3 368.5 L128.2 371.0 L127.1 373.6 L127.1 373.6 L126.1 375.7 L125.2 377.9 L124.4 380.1 L123.6 382.3 L122.8 384.5 L122.1 386.7 L121.4 389.0 L120.8 391.2 L120.2 393.5 L119.7 395.7 L119.2 398.0 L118.8 400.3 L118.4 402.6 L118.0 404.9 L117.7 407.2 L117.4 409.5 L117.2 411.8 L117.1 414.1 L116.9 416.4 L116.9 418.7 L116.8 421.0 L116.8 423.4 L116.9 425.7 L117.0 428.0 L117.2 430.3 L117.4 432.6 L117.7 434.9 L118.0 437.2 L118.3 439.5 L118.7 441.8 L119.2 444.1 L119.7 446.4 L120.2 448.7 L120.8 450.9 L121.4 453.2 L122.1 455.4 L122.8 457.7 L123.6 459.9 L124.4 462.1 L125.3 464.3 L126.2 466.5 L127.2 468.7 L128.2 470.8 L129.3 473.0 L130.4 475.1 L131.5 477.2 L132.7 479.3 L133.9 481.4 L135.2 483.4 L136.5 485.5 L137.9 487.5 L139.3 489.5 L140.8 491.5 L142.3 493.4 L143.8 495.3 L145.4 497.2 L147.0 499.1 L148.6 500.9 L150.3 502.8 L152.1 504.6 L153.9 506.3 L155.7 508.1 L157.5 509.8 L159.4 511.5 L161.3 513.1 L163.3 514.7 L165.3 516.3 L167.3 517.9 L169.4 519.4 L171.5 520.9 L173.7 522.4 L175.8 523.8 L178.0 525.2 L180.3 526.6 L182.5 527.9 L184.8 529.2 L187.1 530.4 L189.5 531.6 L191.8 532.8 L194.2 534.0 L196.7 535.1 L199.1 536.1 L201.6 537.1 L204.1 538.1 L206.6 539.1 L209.1 540.0 L211.7 540.8 L214.3 541.7 L216.9 542.4 L219.5 543.2 L222.1 543.9 L224.8 544.5 L227.5 545.2 L230.1 545.7 L232.8 546.3 L235.5 546.8 L238.3 547.2 L241.0 547.6 L243.7 548.0 L246.5 548.3 L249.2 548.6 L252.0 548.8 L254.8 549.0 L257.5 549.1 L260.3 549.2 L263.1 549.3 L265.9 549.3 L268.7 549.2 L271.4 549.2 L274.2 549.0 L277.0 548.9 L279.8 548.7 L282.6 548.4 L285.3 548.1 L288.1 547.8 L290.8 547.4 L293.6 547.0 L296.3 546.5 L299.1 546.0 L301.8 545.4 L304.5 544.8 L307.2 544.2 L309.9 543.5 L312.6 542.8 L315.2 542.0 L317.9 541.2 L320.5 540.4 L323.1 539.5 L325.7 538.6 L328.2 537.6 L330.8 536.6 L333.3 535.5 L335.8 534.5 L338.3 533.3 L340.8 532.2 L343.2 531.0 L345.6 529.7 L348.0 528.5 L350.3 527.2 L352.7 525.8 L355.0 524.5 L357.2 523.0 L359.5 521.6 L361.7 520.1 L363.9 518.6 L366.0 517.1 L368.1 515.5 L370.2 513.9 L372.3 512.2 L374.3 510.6 L376.2 508.9 L378.2 507.2 L380.1 505.4 L382.0 503.6 L383.8 501.8 L385.6 500.0 L387.3 498.1 L389.1 496.2 L390.7 494.3 L392.4 492.4 L394.0 490.4 L395.5 488.5 L397.0 486.5 L398.5 484.4 L399.9 482.4 L401.3 480.3 L402.7 478.3 L404.0 476.2 L405.2 474.1 L406.4 471.9 L407.6 469.8 L408.7 467.6 L409.8 465.4 L410.9 463.2 L411.8 461.0 L412.8 458.8 L413.7 456.6 L414.5 454.4 L415.3 452.1 L415.3 452.1 L416.3 449.5 L417.2 446.8 L418.1 444.2 L419.0 441.5 L419.9 438.9 L420.8 436.3 L421.7 433.6 L422.6 431.0 L423.6 428.4 L424.5 425.8 L425.4 423.2 L426.3 420.6 L427.2 418.0 L428.1 415.4 L429.0 412.8 L429.9 410.2 L430.8 407.6 L431.7 405.0 L432.6 402.4 L433.5 399.9 L434.3 397.3 L435.2 394.7 L436.1 392.2 L437.0 389.6 L437.9 387.1 L438.8 384.5 L439.7 382.0 L440.5 379.4 L441.4 376.9 L442.3 374.4 L443.2 371.8 L444.1 369.3 L444.9 366.8 L445.8 364.3 L446.7 361.7 L447.5 359.2 L448.4 356.7 L449.3 354.2 L450.2 351.7 L451.0 349.2 L451.9 346.7 L452.7 344.2 L453.6 341.8 L454.5 339.3 L455.3 336.8 L456.2 334.3 L457.0 331.9 L457.9 329.4 L458.7 326.9 L459.6 324.5 L460.5 322.0 L461.3 319.6 L462.2 317.1 L463.0 314.7 L463.8 312.2 L464.7 309.8 L465.5 307.4 L466.4 304.9 L467.2 302.5 L468.1 300.1 L468.9 297.7 L469.7 295.3 L470.6 292.8 L471.4 290.4 L472.2 288.0 L473.1 285.6 L473.9 283.2 L474.7 280.8 L475.6 278.5 L476.4 276.1 L477.2 273.7 L478.0 271.3 L478.9 268.9 L479.7 266.6 L480.5 264.2 L481.3 261.8 L482.1 259.5 L483.0 257.1 L483.8 254.8 L484.6 252.4 L485.4 250.1 L486.2 247.7 L487.0 245.4 L487.8 243.0 L488.6 240.7 L489.5 238.4 L490.3 236.1 L491.1 233.7 L491.9 231.4 Z" fill="none" stroke="#2a45a0" stroke-width="0.6" transform="translate(0.8,0.3)" opacity="0"/>
</svg>


<!-- viewcube fragment -->
<svg class="abs" style="left:770px;top:0" width="109" height="40">
  <defs><filter id="vcs" x="-50%" y="-50%" width="200%" height="200%"><feGaussianBlur stdDeviation="3.5"/></filter>
  <linearGradient id="vcg" x1="0" y1="0" x2="1" y2="0.3"><stop offset="0" stop-color="#ececec"/><stop offset="1" stop-color="#dcdcdc"/></linearGradient></defs>
  <path d="M22 5 L72 20 L78 6 L30 0 Z" fill="#000" opacity="0.16" filter="url(#vcs)"/>
  <path d="M27 0 L75.5 0 L72.2 16.8 L21.6 2.6 Z" fill="url(#vcg)"/>
  <path d="M28.5 0 V2.6 M57.5 0 V2.5 M59.5 0 V2.4" stroke="#999" stroke-width="1.2"/>
  <path d="M31 3.6 L33 4 M37 5.2 L39 5.8 M45 7.6 L47 8.2 M53 10 L55 10.6 M61 12.6 L63 13.2" stroke="#b0b0b0" stroke-width="1"/>
  <path d="M21.6 2.6 L72.2 17" stroke="#86e486" stroke-width="2.4"/>
  <path d="M72.4 17 L75.8 0" stroke="#4848d8" stroke-width="2.2"/>
  <path d="M74.6 15 L78.8 0" stroke="#e87878" stroke-width="1.6"/>
  <path d="M15.4 0 L15.4 5" stroke="#86e486" stroke-width="2.4"/>
</svg>

<div id="panel">
  <div id="hdr">
    <div class="abs" style="left:14px;top:8px;width:12px;height:12px;border-radius:50%;background:#333"><div class="abs" style="left:3px;top:5px;width:6px;height:2px;background:#f2f2f2"></div></div>
    <div class="t">EXTRUDE</div>
    <svg class="abs" style="left:293px;top:11px" width="14" height="10"><path d="M0 0 L6 4.5 L0 9 Z M6 0 L12 4.5 L6 9 Z" fill="#333"/></svg>
  </div>
  <div class="lbl" style="top:42px">Type</div>
  <div class="lbl" style="top:79px">Profiles</div>
  <div class="lbl" style="top:117px">Start</div>
  <div class="lbl" style="top:154px">Direction</div>
  <div class="lbl" style="top:192px">Extent Type</div>
  <div class="lbl" style="top:229px">Object</div>
  <div class="lbl" style="top:267px">Distance</div>
  <div class="lbl" style="top:304px">Extend</div>
  <div class="lbl" style="top:379px">Taper Angle</div>
  <div class="lbl" style="top:429px">Operation</div>

  <!-- type buttons -->
  <div class="abs" style="left:107px;top:32px;width:29px;height:34px;background:#0696d7;border-radius:2px"></div>

  <div class="box" style="top:70px;width:97px"><span class="v" style="left:26px;letter-spacing:-0.14px">3 selected</span></div>
  <div class="box" style="top:107px"><span class="v">Profile Plane</span><i class="dd"></i></div>
  <div class="box" style="top:145px"><span class="v">One Side</span><i class="dd"></i></div>
  <div class="box" style="top:182px"><span class="v">To Object</span><i class="dd"></i></div>
  <div class="box" style="top:220px;height:34px;width:96px;background:#0696d7;border-color:#0696d7"><span class="v" style="color:#fff;left:26px;letter-spacing:-0.14px">1 selected</span></div>
  <div class="box" style="top:257px"><span class="v" style="left:3px">(To)</span></div>
  <div class="abs" style="left:107px;top:294px;width:29px;height:34px;background:#0696d7;border-radius:2px"></div>
  <div class="box" style="top:333px;height:32px"><span class="v" style="left:35px;top:7px">mm</span></div>
  <div class="box" style="top:370px"><span class="v" style="left:3px">0.0 deg</span></div>
  <div class="abs" style="left:2px;top:412px;width:293px;height:2px;background:#d0d0d0"></div>
  <div class="box" style="top:420px"><span class="v">Join</span><i class="dd"></i></div>
  <div class="abs" style="left:0;top:456px;width:100%;height:2px;background:#c8c8c8"></div>
  <div class="btn" style="left:134px">OK</div>
  <div class="btn" style="left:222px">Cancel</div>
</div>


<svg class="abs" style="left:0;top:0;z-index:5" width="879" height="728">
<defs>
 <linearGradient id="gBox" x1="0" y1="0" x2="0" y2="1"><stop offset="0" stop-color="#ffffff"/><stop offset="1" stop-color="#b8bcc4"/></linearGradient>
</defs>
<!-- type icon 1 (on blue) -->
<path d="M686 84 L689.5 80 L701 80 L697 84 Z" fill="#c4e4fb"/>
<path d="M686 84 H697 V97.5 H686 Z" fill="#8fcbf6"/>
<path d="M697 84 L701 80 V94 L697 97.5 Z" fill="#5eaae2"/>
<path d="M686 97.5 H697 L701 94 V96.5 L697 100.3 H686 Z" fill="#eadfd4"/>
<path d="M703.7 96 V82.5" stroke="#fff" stroke-width="1.1"/>
<path d="M701.8 84.5 L703.7 81 L705.6 84.5 Z" fill="#fff"/>
<!-- type icon 2 -->
<path d="M722 84 L725.5 80 L737.5 80 L734 84 Z" fill="#7fbde8"/>
<path d="M722 84 H727 V97.5 H722 Z M729 84 H734 V97.5 H729 Z" fill="#62aae0"/>
<path d="M727 84 H729 V95 H727 Z" fill="#4a90c8"/>
<path d="M734 84 L737.5 80 V94 L734 97.5 Z" fill="#4f97d4"/>
<path d="M722 97.5 H734 L737.5 94 V96.5 L734 100 H722 Z" fill="#c8c8c8"/>
<path d="M739.4 96 V82.5" stroke="#333" stroke-width="1.1"/>
<path d="M737.6 84.5 L739.4 81 L741.2 84.5 Z" fill="#333"/>
<!-- profiles cursor -->
<path d="M691.3 118.5 L691.3 134 L694.7 130.6 L697 136.6 L699.7 135.5 L697.4 129.8 L702.3 129.8 Z" fill="#eee" stroke="#555" stroke-width="1" stroke-linejoin="miter"/>
<!-- X icons -->
<path d="M792.8 122.8 L801.2 131.2 M801.2 122.8 L792.8 131.2" stroke="#3a3a3a" stroke-width="2.1"/>
<path d="M792.3 273.3 L800.7 281.7 M800.7 273.3 L792.3 281.7" stroke="#3a3a3a" stroke-width="2.1"/>
<!-- start icon -->
<path d="M690.6 155.2 H692.8 V174 H690.6 Z" fill="#142a5c"/>
<path d="M693 164.3 H699" stroke="#222" stroke-width="1.1"/>
<path d="M698 161.8 L702 164.3 L698 166.8 Z" fill="#222"/>
<!-- direction icon -->
<path d="M692.1 192.7 L704.1 197.5 L704.1 205.7 L692.1 201.4 Z" fill="#f5b88a" stroke="#e8a676" stroke-width="0.6"/>
<path d="M697.4 199.5 L688 208.3" stroke="#666" stroke-width="1.3"/>
<path d="M685.5 210.8 L686.2 205.3 L690.9 210 Z" fill="#666"/>
<!-- extent type icon -->
<path d="M694 230.2 H696.9 V233.6 H694 Z M694 245 H696.9 V249.5 H694 Z M694 246.2 H705.1 V249.5 H694 Z M702.5 230.2 H705.1 V249.5 H702.5 Z" fill="#142a5c"/>
<path d="M694 235 H696.9 V243.7 H694 Z" fill="#f01818"/>
<path d="M685.4 239.4 H690.5" stroke="#111" stroke-width="1.1"/>
<path d="M690 236.5 L693.8 239.4 L690 242.3 Z" fill="#111"/>
<!-- object cursor (on blue) -->
<path d="M691.6 268.5 L691.6 284 L695 280.6 L697.3 286.6 L700 285.5 L697.7 279.8 L702.6 279.8 Z" fill="#e6e6e6" stroke="#555" stroke-width="1"/>
<!-- extend icons -->
<rect x="685.3" y="347.6" width="11" height="10" fill="url(#gBox)"/>
<path d="M704 342.4 V349.8 L698 355.3" fill="none" stroke="#101a60" stroke-width="2.1"/>
<path d="M698 354.5 V362.6" fill="none" stroke="#ff1010" stroke-width="2.1"/>
<path d="M721.6 347 H738 L733 357.5 H721.6 Z" fill="url(#gBox)"/>
<path d="M740.3 342.4 V349.8 L733.7 355.8 V362.6" fill="none" stroke="#ff1010" stroke-width="2.1"/>
<!-- join icon -->
<rect x="690.4" y="469" width="10.2" height="9" fill="#6eb4e8" stroke="#4a94d0" stroke-width="0.6"/>
<rect x="687.1" y="475" width="16.8" height="10.8" fill="#5aa6e2" stroke="#3f8cd0" stroke-width="0.6"/>
<!-- info icon -->
<circle cx="591.3" cy="521.2" r="7.3" fill="#111"/>
<rect x="590.2" y="519.5" width="2.4" height="5.5" fill="#fff"/><rect x="589.2" y="524.2" width="4.4" height="1.4" fill="#fff"/><rect x="589.3" y="519.5" width="2" height="1.3" fill="#fff"/>
<circle cx="591.4" cy="516.8" r="1.35" fill="#fff"/>
</svg>
<!-- floating (To) input -->
<div class="abs" style="left:588px;top:378px;width:5px;height:24px;background:repeating-linear-gradient(135deg,#cfcfcf 0 1px,transparent 1px 3px);z-index:6"></div>
<div class="abs" style="left:597px;top:377px;width:1px;height:25px;background:#c4c4c4;z-index:6"></div>
<div class="abs" style="left:688px;top:376px;width:31px;height:27px;background:#efefef;z-index:6">
  <div class="abs" style="left:14.4px;top:5.4px;width:3.6px;height:3.6px;border-radius:50%;background:#8a8a8a"></div>
  <div class="abs" style="left:14.4px;top:11.5px;width:3.6px;height:3.6px;border-radius:50%;background:#8a8a8a"></div>
  <div class="abs" style="left:14.4px;top:17.7px;width:3.6px;height:3.6px;border-radius:50%;background:#8a8a8a"></div>
</div>
<div class="abs" style="left:602px;top:377px;width:87px;height:25px;background:#fff;border:1px solid #c4c4c4;z-index:6">
  <div class="abs" style="left:30px;top:4px;width:24px;height:17px;background:#1a6fd6"></div>
  <div class="abs" style="left:31px;top:5px;font-size:14px;color:#fff;letter-spacing:-0.2px">(To)</div>
  <div class="abs" style="left:54px;top:5px;width:1px;height:16px;background:#111"></div>
</div>

<div id="nav"></div>
<div id="search"><span class="abs" style="left:-3px;top:7px;font-size:14px;color:#555">S</span></div>
<div class="abs" style="left:743px;top:650px;font-size:13.85px;font-weight:bold;color:#2a2a2a">Multiple selections</div>
<div id="tl">
  <div class="abs" style="left:70px;top:9px;width:115px;height:7px;background:#66fcd9"></div>
  <div class="abs" style="left:158px;top:14px;width:29px;height:30px;background:#0696d7;border-radius:2px"></div>
  <div class="tick" style="left:83px"></div><div class="tick" style="left:111px"></div><div class="tick" style="left:141px"></div><div class="tick" style="left:171px"></div>
</div>

<svg class="abs" style="left:0;top:630px;z-index:5" width="879" height="98">
<defs>
 <linearGradient id="gMag" x1="0" y1="0" x2="1" y2="1"><stop offset="0" stop-color="#ffffff"/><stop offset="1" stop-color="#b9dde6"/></linearGradient>
 <linearGradient id="gScr" x1="0" y1="0" x2="0" y2="1"><stop offset="0" stop-color="#a8c8ec"/><stop offset="1" stop-color="#7ea6d6"/></linearGradient>
 <linearGradient id="gGrid" x1="0" y1="0" x2="0" y2="1"><stop offset="0" stop-color="#c4c4c4"/><stop offset="1" stop-color="#6a6a6a"/></linearGradient>
</defs>
<!-- plus circle -->
<circle cx="300.7" cy="26.5" r="6" fill="#222"/>
<path d="M297.2 26.5 H304.2 M300.7 23 V30" stroke="#fff" stroke-width="1.6"/>
<!-- hand -->
<path d="M326 33.5 L322.3 27.8 Q321.6 26.3 323.2 26.2 L326.5 28.8 L325.3 18.2 Q325.4 16.6 326.8 16.8 L328.5 24 L328.2 15.8 Q328.6 14.4 330 14.8 L331.2 23.6 L331.6 16.2 Q332.3 15 333.5 15.6 L334 24 L335.3 18 Q336.3 17 337.2 17.8 L337 27 L336.5 30.5 L335 33.8 Z" fill="#fff" stroke="#333" stroke-width="1.1" stroke-linejoin="round"/>
<!-- zoom + -->
<circle cx="360" cy="21.4" r="6.3" fill="url(#gMag)" stroke="#333" stroke-width="1.3"/>
<path d="M364.6 26.2 L371 32" stroke="#333" stroke-width="2.4" stroke-linecap="round"/>
<path d="M367.5 17.8 H372.5 M370 15.3 V20.3 M367.5 21.8 H372.5" stroke="#333" stroke-width="1"/>
<!-- zoom window -->
<circle cx="392.8" cy="22.5" r="6.6" fill="url(#gMag)" stroke="#555" stroke-width="1.2"/>
<rect x="389.3" y="19" width="7" height="7" fill="#e8e8f0" stroke="#666" stroke-width="0.9"/>
<path d="M397.6 27.4 L403.5 32.6" stroke="#333" stroke-width="2.4" stroke-linecap="round"/>
<path d="M411.5 23 H418 L414.75 27.5 Z" fill="#222"/>
<!-- monitor -->
<rect x="427.1" y="15.2" width="18.6" height="13.9" rx="1" fill="#eee" stroke="#888" stroke-width="0.9"/>
<rect x="428.9" y="16.8" width="15" height="10.7" fill="url(#gScr)" stroke="#2a4a80" stroke-width="0.9"/>
<path d="M434.5 29.1 H438.5 V31.5 H434.5 Z" fill="#aaa"/>
<rect x="431.6" y="31.5" width="10.2" height="2.4" rx="1" fill="#666"/>
<path d="M449.4 23 H455.8 L452.6 27.7 Z" fill="#222"/>
<!-- grid -->
<rect x="465" y="16.1" width="19.2" height="17.8" fill="url(#gGrid)"/>
<path d="M465 19.5 H484.2 M465 22.5 H484.2 M465 25.5 H484.2 M465 28.5 H484.2 M465 31.5 H484.2 M468.3 16.1 V33.9 M471.5 16.1 V33.9 M474.7 16.1 V33.9 M477.9 16.1 V33.9 M481.1 16.1 V33.9" stroke="#f2f2f2" stroke-width="0.8"/>
<path d="M488.3 23 H494.8 L491.55 27.7 Z" fill="#222"/>
<!-- layout -->
<rect x="504.2" y="17.2" width="8.6" height="15.2" rx="0.8" fill="#93b9e2" stroke="#3a5a90" stroke-width="1"/>
<rect x="513.9" y="17.2" width="8.6" height="15.2" rx="0.8" fill="#93b9e2" stroke="#3a5a90" stroke-width="1"/>
<path d="M504.5 24.8 H512.5 M514.2 24.8 H522.2" stroke="#5a7aa8" stroke-width="1"/>
<path d="M526.5 23 H533 L529.75 27.7 Z" fill="#222"/>
<!-- timeline controls -->
<path d="M-3 70.8 L11.5 79 L-3 87 Z" fill="#5e5e5e"/>
<path d="M28.3 71.5 L37.8 78.8 L28.3 86 Z" fill="#5e5e5e"/>
<rect x="39.8" y="71.3" width="2.4" height="15" fill="#5e5e5e"/>
<!-- sketch icon -->
<rect x="73.5" y="69" width="17.5" height="16.5" fill="none" stroke="#aaa" stroke-width="1"/>
<path d="M77.5 73.2 H85.5 Q85.5 81 77.5 81.3 Z" fill="none" stroke="#666" stroke-width="0.9"/>
<g fill="#2a8cf0"><rect x="72.6" y="68.2" width="2" height="2"/><rect x="89.8" y="68.2" width="2" height="2"/><rect x="72.6" y="84.6" width="2" height="2"/><rect x="76.5" y="72.3" width="2" height="2"/><rect x="84.5" y="72.3" width="2" height="2"/><rect x="76.5" y="80.3" width="2" height="2"/></g>
<path d="M83 87.5 L89.5 80.5 L91.8 82.8 L85.3 89.8 Z" fill="#f5b840"/>
<path d="M89.5 80.5 L90.8 79.2 L93 81.5 L91.8 82.8 Z" fill="#e83030"/>
<path d="M83 87.5 L82.3 90.3 L85.3 89.8 Z" fill="#444"/>
<!-- cube icons -->
<g>
<path d="M103.4 71.8 L106.4 68.2 L117 68.2 L114 71.8 Z" fill="#7fc0ee"/>
<path d="M103.4 71.8 H114 V84 H103.4 Z" fill="#62aae6"/>
<path d="M114 71.8 L117 68.2 V81 L114 84 Z" fill="#4a90d0"/>
<path d="M103.4 84 H114 L117 81 V83.5 L114 86.5 H103.4 Z" fill="#c6c6c6"/>
<path d="M120 83 V70" stroke="#333" stroke-width="1"/><path d="M118.4 71.5 L120 68.5 L121.6 71.5 Z" fill="#333"/>
</g>
<g transform="translate(30,0)">
<path d="M103.4 71.8 L106.4 68.2 L117 68.2 L114 71.8 Z" fill="#7fc0ee"/>
<path d="M103.4 71.8 H114 V84 H103.4 Z" fill="#62aae6"/>
<path d="M114 71.8 L117 68.2 V81 L114 84 Z" fill="#4a90d0"/>
<path d="M103.4 84 H114 L117 81 V83.5 L114 86.5 H103.4 Z" fill="#c6c6c6"/>
<path d="M120 83 V70" stroke="#333" stroke-width="1"/><path d="M118.4 71.5 L120 68.5 L121.6 71.5 Z" fill="#333"/>
</g>
<!-- selected sketch (on blue) -->
<rect x="163" y="69" width="17" height="16.5" fill="none" stroke="#1f7fb8" stroke-width="1"/>
<path d="M167 73.2 H175 Q175 81 167 81.3 Z" fill="none" stroke="#2a70a0" stroke-width="0.9"/>
<path d="M173 87.5 L179.5 80.5 L181.8 82.8 L175.3 89.8 Z" fill="#f5b840"/>
<path d="M179.5 80.5 L180.8 79.2 L183 81.5 L181.8 82.8 Z" fill="#e83030"/>
<!-- marker -->
<rect x="180" y="60" width="15" height="5.6" fill="#5a5a5a"/>
<path d="M181 65.6 L194 65.6 L189 71 L186 71 Z" fill="#5a5a5a"/>
<rect x="186" y="70" width="3" height="28" fill="#5a5a5a"/>
<!-- gear -->
<g transform="translate(862.5,79)">
 <circle r="6.2" fill="#7a7a7a"/>
 <g fill="#7a7a7a"><rect x="-1.8" y="-9" width="3.6" height="18"/><rect x="-1.8" y="-9" width="3.6" height="18" transform="rotate(45)"/><rect x="-1.8" y="-9" width="3.6" height="18" transform="rotate(90)"/><rect x="-1.8" y="-9" width="3.6" height="18" transform="rotate(135)"/></g>
 <circle r="2.6" fill="#f0f0f0"/>
</g>
</svg>

</body></html>
